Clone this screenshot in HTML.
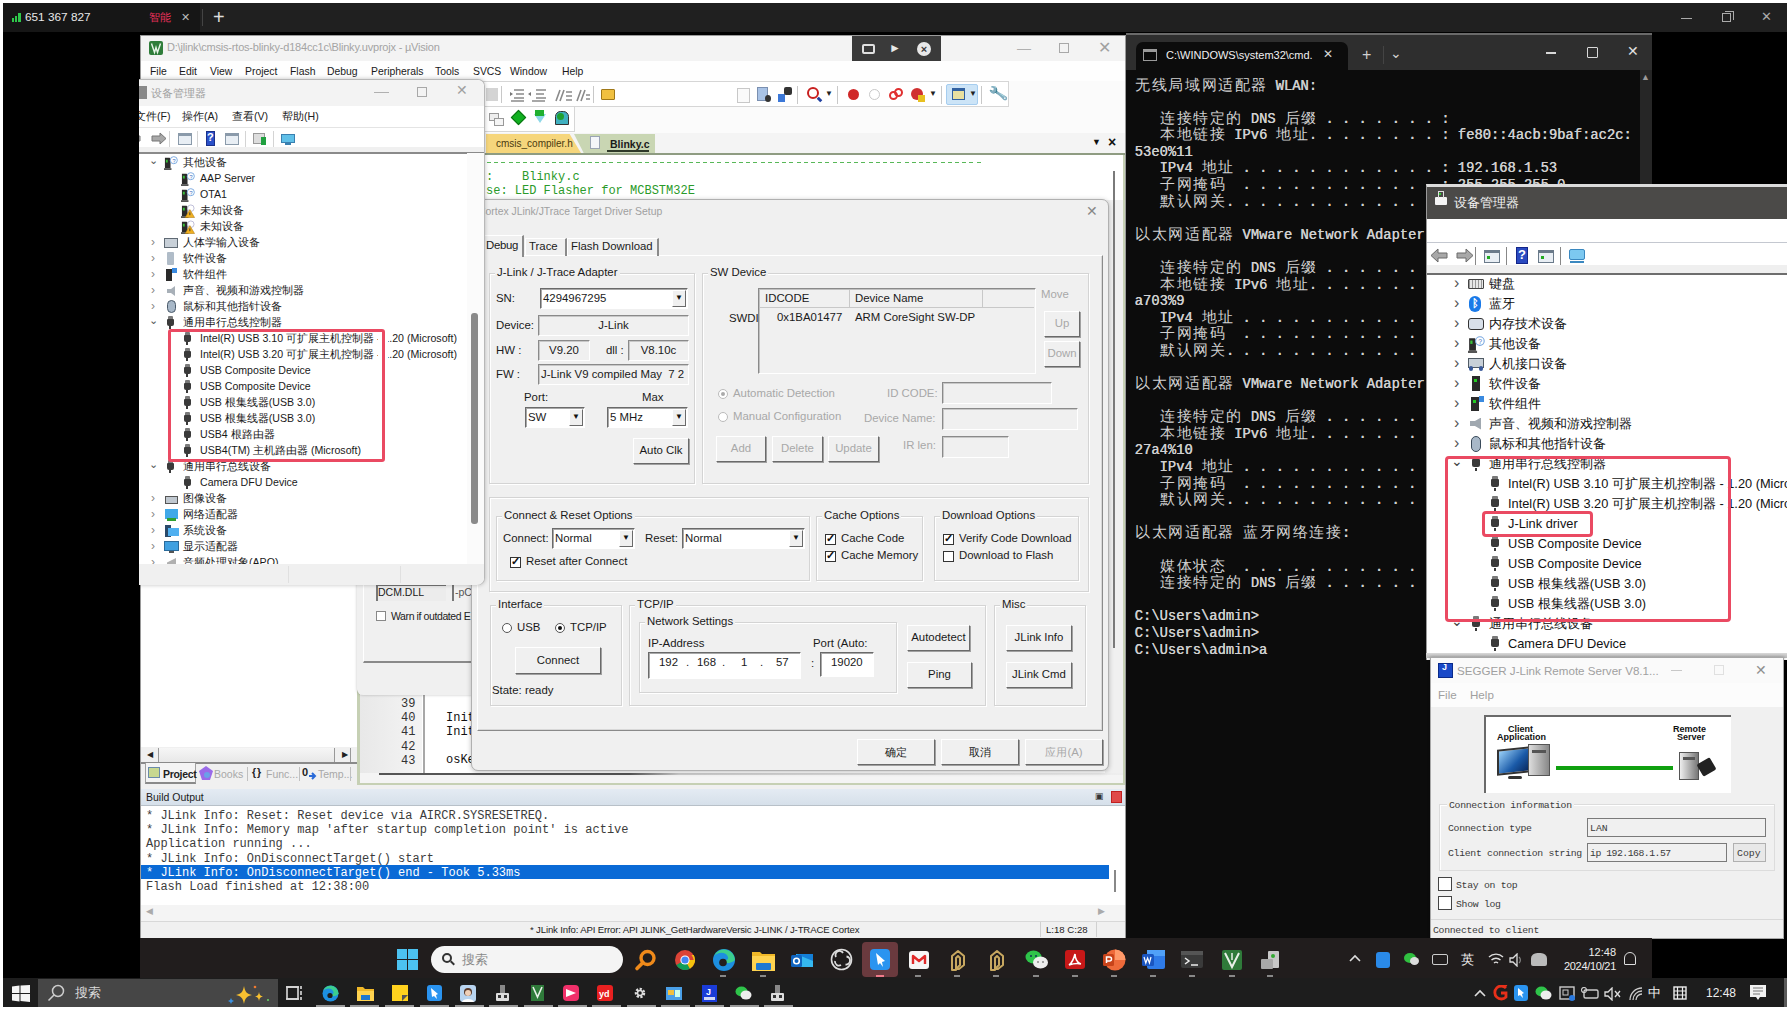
<!DOCTYPE html>
<html><head><meta charset="utf-8">
<style>
*{box-sizing:border-box}
html,body{margin:0;padding:0}
body{width:1787px;height:1010px;position:relative;overflow:hidden;background:#000;font-family:"Liberation Sans",sans-serif;color:#000}
.a{position:absolute}
.nw{white-space:pre}
</style></head><body>
<!-- outer frame -->
<div class="a" style="left:0;top:0;width:1787px;height:3px;background:#fff"></div>
<div class="a" style="left:0;top:0;width:3px;height:1010px;background:#fff"></div>
<div class="a" style="left:0;top:1007px;width:1787px;height:3px;background:#fff"></div>
<div class="a" style="left:3px;top:3px;width:1784px;height:29px;background:#202020"></div>
<div class="a" style="left:3px;top:3px;width:197px;height:29px;background:#161616"></div>
<div class="a" style="left:12.0px;top:18px;width:2.2px;height:4px;background:#2ec84a"></div>
<div class="a" style="left:15.2px;top:16px;width:2.2px;height:6px;background:#2ec84a"></div>
<div class="a" style="left:18.4px;top:13px;width:2.2px;height:9px;background:#2ec84a"></div>
<div class="a nw" style="left:25px;top:10px;font-size:11.8px;color:#e8e8e8">651 367 827</div>
<div class="a nw" style="left:149px;top:10px;font-size:11px;color:#e8305a">智能</div>
<div class="a nw" style="left:181px;top:11px;font-size:11px;color:#bbb">✕</div>
<div class="a" style="left:202px;top:9px;width:1px;height:17px;background:#444"></div>
<div class="a nw" style="left:213px;top:6px;font-size:20px;color:#ddd">+</div>
<div class="a" style="left:1681px;top:18px;width:11px;height:1px;background:#aaa"></div>
<div class="a" style="left:1722px;top:13px;width:9px;height:9px;border:1px solid #aaa"></div>
<div class="a" style="left:1725px;top:11px;width:9px;height:9px;border-top:1px solid #aaa;border-right:1px solid #aaa"></div>
<div class="a nw" style="left:1761px;top:9px;font-size:13px;color:#aaa">✕</div>
<!-- uVision window -->
<div id="uv" class="a" style="left:140px;top:35px;width:986px;height:903px;background:#f0f0f0;border:1px solid #9a9a9a"></div>
<div class="a" style="left:141px;top:36px;width:984px;height:25px;background:#f3f3f3"></div>
<svg class="a" style="left:149px;top:41px" width="14" height="14"><rect width="14" height="14" rx="2" fill="#2f7d3a"/><path d="M2.5 2.5l3 9 1.5-5 1.5 5 3-9" stroke="#e8f4e8" stroke-width="1.4" fill="none"/></svg>
<div class="a nw" style="left:167px;top:41px;font-size:11px;color:#a4a4a4;letter-spacing:-0.2px">D:\jlink\cmsis-rtos-blinky-d184cc1c\Blinky.uvprojx - &micro;Vision</div>
<div class="a nw" style="left:1017px;top:40px;font-size:14px;color:#b0b0b0">&#8212;</div>
<div class="a" style="left:1059px;top:43px;width:10px;height:10px;border:1px solid #a8a8a8"></div>
<div class="a nw" style="left:1098px;top:38px;font-size:16px;color:#a0a0a0">&#10005;</div>
<!-- remote bar -->
<div class="a" style="left:852px;top:36px;width:89px;height:26px;background:#3a3a3a"></div>
<div class="a" style="left:862px;top:44px;width:13px;height:10px;border:2px solid #e0e0e0;border-radius:2px"></div>
<div class="a nw" style="left:889px;top:41px;font-size:12px;color:#e8e8e8;font-weight:bold">&#9658;</div>
<div class="a" style="left:917px;top:42px;width:14px;height:14px;border-radius:50%;background:#e8e8e8;color:#3a3a3a;font-size:11px;line-height:14px;text-align:center;font-weight:bold">&#215;</div>
<!-- menu -->
<div class="a" style="left:141px;top:61px;width:984px;height:20px;background:#fefefe"></div>
<div class="a nw" style="left:150px;top:66px;font-size:10.4px;color:#1a1a1a;word-spacing:0"><span class="a" style="top:0;left:0">File</span><span class="a" style="top:0;left:29px">Edit</span><span class="a" style="top:0;left:60px">View</span><span class="a" style="top:0;left:95px">Project</span><span class="a" style="top:0;left:140px">Flash</span><span class="a" style="top:0;left:177px">Debug</span><span class="a" style="top:0;left:221px">Peripherals</span><span class="a" style="top:0;left:285px">Tools</span><span class="a" style="top:0;left:323px">SVCS</span><span class="a" style="top:0;left:360px">Window</span><span class="a" style="top:0;left:412px">Help</span></div>
<!-- toolbars -->
<div class="a" style="left:141px;top:81px;width:984px;height:52px;background:#fbfbfb"></div>
<div class="a" style="left:141px;top:81px;width:868px;height:26px;border:1px solid #d6d6d6;background:#fff"></div>
<div class="a" style="left:141px;top:107px;width:434px;height:25px;border:1px solid #d6d6d6;border-top:none;background:#fff"></div>

<!-- toolbar icons row1 (visible part) -->
<div class="a" style="left:486px;top:88px;width:12px;height:13px;background:#c9c9c9;opacity:.8"></div>
<div class="a" style="left:501px;top:86px;width:1px;height:17px;background:#c8c8c8"></div>
<svg class="a" style="left:508px;top:86px" width="84" height="18" viewBox="0 0 84 18">
<g stroke="#8a8a8a" stroke-width="1.6">
<path d="M6 4h10M8 8h8M6 12h10M3 15h13"/>
<path d="M28 4h10M28 8h8M28 12h10M24 15h13"/>
<path d="M48 15l4-11M52 15l4-11M58 6h6M58 10h6M58 14h6"/>
<path d="M69 15l4-11M73 15l4-11M78 9h4M78 13h4"/>
</g>
<path d="M2 6l3 2-3 2z" fill="#777"/><path d="M23 6l-3 2 3 2z" fill="#777"/>
</svg>
<div class="a" style="left:593px;top:86px;width:1px;height:17px;background:#c8c8c8"></div>
<div class="a" style="left:601px;top:89px;width:14px;height:11px;background:#f0c040;border:1px solid #a07818;border-radius:1px"></div>
<div class="a" style="left:737px;top:88px;width:13px;height:15px;border:1px solid #c8c8c8;background:#fafafa"></div>
<div class="a" style="left:757px;top:87px;width:11px;height:14px;background:#a9c3e6;border:1px solid #7a8fb0"></div>
<div class="a" style="left:765px;top:95px;width:6px;height:7px;background:#333;border-radius:50%"></div>
<div class="a" style="left:778px;top:94px;width:7px;height:8px;background:#3c78d8"></div>
<div class="a" style="left:784px;top:87px;width:8px;height:8px;background:#333;border-radius:2px"></div>
<div class="a" style="left:797px;top:86px;width:1px;height:18px;background:#c8c8c8"></div>
<div class="a" style="left:807px;top:87px;width:12px;height:12px;border:2px solid #c82020;border-radius:50%;background:#fff"></div>
<div class="a" style="left:817px;top:98px;width:5px;height:3px;background:#2040a0;transform:rotate(45deg)"></div>
<div class="a nw" style="left:825px;top:89px;font-size:8px;color:#222">&#9660;</div>
<div class="a" style="left:837px;top:86px;width:1px;height:18px;background:#c8c8c8"></div>
<div class="a" style="left:848px;top:89px;width:11px;height:11px;background:#d02828;border-radius:50%"></div>
<div class="a" style="left:869px;top:89px;width:11px;height:11px;border:1px solid #c8c8c8;border-radius:50%"></div>
<div class="a" style="left:889px;top:91px;width:9px;height:9px;border:2px solid #e03030;border-radius:50%"></div>
<div class="a" style="left:894px;top:88px;width:9px;height:9px;border:2px solid #e03030;border-radius:50%"></div>
<div class="a" style="left:911px;top:88px;width:12px;height:12px;background:#d03030;border-radius:50%"></div>
<div class="a" style="left:918px;top:95px;width:7px;height:7px;background:#e8c020"></div>
<div class="a nw" style="left:929px;top:89px;font-size:8px;color:#222">&#9660;</div>
<div class="a" style="left:941px;top:86px;width:1px;height:18px;background:#c8c8c8"></div>
<div class="a" style="left:946px;top:84px;width:32px;height:21px;background:#cce4f7;border:1px solid #a6cdef;border-radius:2px"></div>
<div class="a" style="left:952px;top:88px;width:13px;height:12px;background:#e8e0a0;border:1px solid #3060a0;border-top:3px solid #3060a0"></div>
<div class="a nw" style="left:969px;top:89px;font-size:8px;color:#222">&#9660;</div>
<div class="a" style="left:981px;top:86px;width:1px;height:18px;background:#c8c8c8"></div>
<div class="a nw" style="left:989px;top:84px;font-size:15px;color:#3a6ab0;transform:rotate(-10deg)">&#128295;</div>
<!-- row2 icons -->
<div class="a" style="left:489px;top:113px;width:10px;height:8px;border:1px solid #999;background:#eee"></div>
<div class="a" style="left:494px;top:118px;width:10px;height:8px;border:1px solid #999;background:#f5f5f5"></div>
<div class="a" style="left:513px;top:112px;width:11px;height:11px;background:#10b020;transform:rotate(45deg);border:1px solid #087010"></div>
<div class="a" style="left:534px;top:114px;width:12px;height:9px;background:#8ed8e8;clip-path:polygon(0 0,100% 0,50% 100%)"></div>
<div class="a" style="left:535px;top:110px;width:9px;height:6px;background:#20b030"></div>
<div class="a" style="left:555px;top:111px;width:14px;height:14px;background:#40b0c0;border:1px solid #333;border-radius:40% 40% 0 0"></div>
<div class="a" style="left:557px;top:113px;width:7px;height:7px;background:#20a030;border-radius:50%"></div>
<!-- tabs row -->
<div class="a" style="left:141px;top:133px;width:984px;height:20px;background:#f4f4f4"></div>
<div class="a" style="left:486px;top:134px;width:95px;height:19px;background:#f6d67c;clip-path:polygon(0 0,88% 0,100% 100%,0 100%)"></div>
<div class="a nw" style="left:496px;top:138px;font-size:10px;color:#4a3a10">cmsis_compiler.h</div>
<div class="a" style="left:574px;top:134px;width:81px;height:19px;background:#c9d6b3;clip-path:polygon(0 0,100% 0,100% 100%,12% 100%,0 0)"></div>
<div class="a" style="left:590px;top:136px;width:10px;height:13px;background:#f4f6fa;border:1px solid #9aa4b4"></div>
<div class="a nw" style="left:610px;top:138px;font-size:10.5px;color:#1a1a1a;font-weight:bold">Blinky.c</div>
<div class="a" style="left:607px;top:150px;width:42px;height:1.5px;background:#2f3a2a"></div>
<div class="a nw" style="left:1092px;top:137px;font-size:9px;color:#111">&#9660;</div>
<div class="a nw" style="left:1108px;top:134px;font-size:14px;color:#111;font-weight:bold">&#215;</div>
<div class="a" style="left:141px;top:153px;width:984px;height:2px;background:#8f9c82"></div>
<!-- editor top -->
<div class="a" style="left:141px;top:155px;width:982px;height:45px;background:#fff"></div>
<div class="a" style="left:1123px;top:155px;width:2px;height:630px;background:#c6d0b4"></div>
<div class="a" style="left:1113px;top:171px;width:2px;height:477px;background:#7a7a7a"></div>
<div class="a" style="left:487px;top:162px;width:497px;height:1.3px;background:repeating-linear-gradient(90deg,#58b858 0 4px,transparent 4px 7.2px)"></div>
<div class="a nw" style="left:486px;top:170px;font-family:'Liberation Mono',monospace;font-size:12px;color:#2a9a2a">:    Blinky.c</div>
<div class="a nw" style="left:486px;top:184px;font-family:'Liberation Mono',monospace;font-size:12px;color:#2a9a2a">se: LED Flasher for MCBSTM32E</div>

<!-- uv lower -->
<div class="a" style="left:141px;top:155px;width:216px;height:608px;background:#fff"></div>
<div class="a" style="left:141px;top:747px;width:216px;height:17px;background:#f0f0f0;border-bottom:2px solid #8a8a8a"></div>
<div class="a nw" style="left:147px;top:750px;font-size:8px;color:#222">◀</div>
<div class="a" style="left:158px;top:748px;width:177px;height:14px;background:linear-gradient(#f6f6f6,#e8e8e8);border-left:1.5px solid #999;border-right:1.5px solid #999"></div>
<div class="a" style="left:337px;top:748px;width:14px;height:14px;border-right:1.5px solid #999"></div>
<div class="a nw" style="left:342px;top:750px;font-size:8px;color:#222">▶</div>
<div class="a" style="left:141px;top:764px;width:216px;height:20px;background:#f0f0f0"></div>
<div class="a" style="left:145px;top:763px;width:51px;height:21px;background:#f4f4f4;border:1px solid #a0a0a0;border-top:none;border-bottom:2px solid #8a8a8a"></div>
<div class="a" style="left:148px;top:767px;width:12px;height:11px;background:#c8d890;border:1px solid #6a8aaa"></div>
<div class="a nw" style="left:163px;top:768px;font-size:10.5px;color:#222;font-weight:bold;letter-spacing:-0.3px">Project</div>
<svg class="a" style="left:199px;top:766px" width="14" height="14"><path d="M7 0l7 5-3 9H3L0 5z" fill="#9a6ae8"/><circle cx="8" cy="9" r="3" fill="#6aa0e8"/></svg>
<div class="a nw" style="left:214px;top:768px;font-size:10.5px;color:#a8a8a8">Books</div>
<div class="a" style="left:247px;top:767px;width:1px;height:14px;background:#c0c0c0"></div>
<div class="a nw" style="left:252px;top:766px;font-size:10.5px;color:#222;font-weight:bold;letter-spacing:-1px">{ }</div>
<div class="a nw" style="left:266px;top:768px;font-size:10.5px;color:#a8a8a8">Func...</div>
<div class="a" style="left:299px;top:767px;width:1px;height:14px;background:#c0c0c0"></div>
<div class="a nw" style="left:302px;top:766px;font-size:11px;color:#222;font-weight:bold">0</div>
<svg class="a" style="left:309px;top:772px" width="8" height="8"><path d="M0 4h5M3 1l3 3-3 3" stroke="#2a6ad8" stroke-width="2" fill="none"/></svg>
<div class="a nw" style="left:318px;top:768px;font-size:10.5px;color:#a8a8a8">Temp...</div>
<div class="a" style="left:350px;top:767px;width:1px;height:14px;background:#c0c0c0"></div>
<div class="a" style="left:357px;top:690px;width:766px;height:95px;background:#fff"></div>
<div class="a" style="left:1105px;top:650px;width:18px;height:135px;background:#f0f0f0"></div>
<div class="a" style="left:360px;top:695px;width:62px;height:78px;background:linear-gradient(90deg,#e8e8e8,#f4f4f4)"></div>
<div class="a" style="left:423px;top:695px;width:2px;height:78px;background:#a8a8a8"></div>
<div class="a nw" style="left:401px;top:697.0px;font-family:'Liberation Mono',monospace;font-size:12px;color:#333">39</div>
<div class="a nw" style="left:401px;top:711.2px;font-family:'Liberation Mono',monospace;font-size:12px;color:#333">40</div>
<div class="a nw" style="left:401px;top:725.4px;font-family:'Liberation Mono',monospace;font-size:12px;color:#333">41</div>
<div class="a nw" style="left:401px;top:739.6px;font-family:'Liberation Mono',monospace;font-size:12px;color:#333">42</div>
<div class="a nw" style="left:401px;top:753.8px;font-family:'Liberation Mono',monospace;font-size:12px;color:#333">43</div>
<div class="a nw" style="left:446px;top:711px;font-family:'Liberation Mono',monospace;font-size:12px;color:#111">Init</div>
<div class="a nw" style="left:446px;top:725px;font-family:'Liberation Mono',monospace;font-size:12px;color:#111">Init</div>
<div class="a nw" style="left:446px;top:753px;font-family:'Liberation Mono',monospace;font-size:12px;color:#111">osKe</div>
<div class="a" style="left:360px;top:773px;width:763px;height:10px;background:#f4f4f4"></div>
<div class="a" style="left:379px;top:773px;width:744px;height:2px;background:linear-gradient(90deg,#555 0,#555 250px,#ccc 300px,#eee)"></div>
<div class="a" style="left:357px;top:783px;width:768px;height:2px;background:#c6d0b4"></div>
<div class="a" style="left:357px;top:690px;width:3px;height:95px;background:#c6d0b4"></div>
<div class="a" style="left:357px;top:560px;width:130px;height:135px;background:#f0f0f0;border-radius:0 0 6px 6px;box-shadow:0 0 3px rgba(0,0,0,.25)"></div>
<div class="a" style="left:363px;top:560px;width:120px;height:103px;border-left:1px solid #fff;border-bottom:2px solid #8a8a8a"></div>
<div class="a" style="left:376px;top:585px;width:70px;height:16px;background:#ececec;border-left:2px solid #777;border-top:1px solid #777"></div>
<div class="a nw" style="left:378px;top:586px;font-size:10.5px;color:#222">DCM.DLL</div>
<div class="a" style="left:452px;top:585px;width:30px;height:16px;border-left:2px solid #777"></div>
<div class="a nw" style="left:455px;top:586px;font-size:10.5px;color:#555">-pCl</div>
<div class="a" style="left:376px;top:611px;width:10px;height:10px;border:1px solid #888;background:#fff"></div>
<div class="a nw" style="left:391px;top:610px;font-size:10.5px;color:#222;letter-spacing:-0.4px">Warn if outdated E</div>
<div class="a" style="left:141px;top:785px;width:984px;height:4px;background:#f0f0f0"></div>
<div class="a" style="left:141px;top:789px;width:984px;height:16px;background:linear-gradient(180deg,#e4ebf3,#d6e0ea)"></div>
<div class="a nw" style="left:146px;top:791px;font-size:10.5px;color:#1a1a1a">Build Output</div>
<div class="a nw" style="left:1095px;top:791px;font-size:9px;color:#333">▣</div>
<div class="a" style="left:1111px;top:791px;width:11px;height:12px;background:#e04848;border:1px solid #c02020"></div>
<div class="a" style="left:141px;top:805px;width:984px;height:100px;background:#fff;border-top:1px solid #b8c0c8"></div>
<div class="a" style="left:141px;top:865px;width:968px;height:14px;background:#0a6ad6"></div>
<div class="a nw" style="left:146px;top:809.0px;font-family:'Liberation Mono',monospace;font-size:12px;color:#3c3c3c">* JLink Info: Reset: Reset device via AIRCR.SYSRESETREQ.</div>
<div class="a nw" style="left:146px;top:823.2px;font-family:'Liberation Mono',monospace;font-size:12px;color:#3c3c3c">* JLink Info: Memory map 'after startup completion point' is active</div>
<div class="a nw" style="left:146px;top:837.4px;font-family:'Liberation Mono',monospace;font-size:12px;color:#3c3c3c">Application running ...</div>
<div class="a nw" style="left:146px;top:851.6px;font-family:'Liberation Mono',monospace;font-size:12px;color:#3c3c3c">* JLink Info: OnDisconnectTarget() start</div>
<div class="a nw" style="left:146px;top:865.8px;font-family:'Liberation Mono',monospace;font-size:12px;color:#fff">* JLink Info: OnDisconnectTarget() end - Took 5.33ms</div>
<div class="a nw" style="left:146px;top:880.0px;font-family:'Liberation Mono',monospace;font-size:12px;color:#3c3c3c">Flash Load finished at 12:38:00</div>
<div class="a" style="left:1114px;top:870px;width:2px;height:22px;background:#888"></div>
<div class="a" style="left:141px;top:905px;width:984px;height:16px;background:#f4f4f4"></div>
<div class="a nw" style="left:146px;top:906px;font-size:9px;color:#aaa">◀</div>
<div class="a nw" style="left:1098px;top:906px;font-size:9px;color:#aaa">▶</div>
<div class="a" style="left:141px;top:921px;width:984px;height:17px;background:#f0f0f0;border-top:1px solid #d8d8d8"></div>
<div class="a nw" style="left:530px;top:924px;font-size:9.6px;color:#222;letter-spacing:-0.15px">* JLink Info: API Error: API JLINK_GetHardwareVersic J-LINK / J-TRACE Cortex</div>
<div class="a" style="left:1040px;top:922px;width:1px;height:15px;background:#d0d0d0"></div>
<div class="a nw" style="left:1046px;top:924px;font-size:9.6px;color:#222">L:18 C:28</div>
<div class="a" style="left:1096px;top:922px;width:1px;height:15px;background:#d0d0d0"></div>
<!-- jlink dialog -->
<div class="a" style="left:471px;top:199px;width:638px;height:572px;background:#f0f0f0;border:1px solid #b0b0b0;border-radius:7px;box-shadow:0 1px 5px rgba(0,0,0,.25)"></div>
<div class="a nw" style="left:478px;top:206px;font-size:10.4px;color:#a0a0a0">Cortex JLink/JTrace Target Driver Setup</div>
<div class="a nw" style="left:1086px;top:203px;font-size:14px;color:#888">✕</div>
<div class="a" style="left:477px;top:255px;width:626px;height:476px;border:1px solid;border-color:#fff #8a8a8a #8a8a8a #fff;box-shadow:inset -1px -1px 0 #d8d8d8"></div>
<div class="a" style="left:472px;top:235px;width:52px;height:22px;background:#f0f0f0;border-right:2px solid #8a8a8a;border-top:1px solid #fff"></div>
<div class="a nw" style="left:486px;top:239px;font-size:11.4px;color:#1a1a1a;letter-spacing:-0.3px">Debug</div>
<div class="a" style="left:525px;top:238px;width:42px;height:18px;border-right:2px solid #8a8a8a;border-top:1px solid #fff;border-left:1px solid #fff"></div>
<div class="a nw" style="left:529px;top:240px;font-size:11.4px;color:#1a1a1a;">Trace</div>
<div class="a" style="left:567px;top:238px;width:92px;height:18px;border-right:2px solid #8a8a8a;border-top:1px solid #fff;border-left:1px solid #fff"></div>
<div class="a nw" style="left:571px;top:240px;font-size:11.4px;color:#1a1a1a;">Flash Download</div>
<div class="a" style="left:472px;top:256px;width:4px;height:1px;background:#f0f0f0"></div>
<div class="a" style="left:489px;top:273px;width:206px;height:211px;border:1px solid #d4d4d4;box-shadow:inset 1px 1px 0 #fff,1px 1px 0 #fff"></div>
<div class="a nw" style="left:495px;top:266px;font-size:11.4px;color:#1a1a1a;background:#f0f0f0;padding:0 2px">J-Link / J-Trace Adapter</div>
<div class="a nw" style="left:496px;top:292px;font-size:11.4px;color:#1a1a1a;">SN:</div>
<div class="a" style="left:540px;top:288px;width:148px;height:21px;background:#fff;border:1px solid;border-color:#6a6a6a #fff #fff #6a6a6a;box-shadow:inset 1px 1px 0 #a8a8a8"></div>
<div class="a nw" style="left:543px;top:292px;font-size:11.4px;color:#1a1a1a;">4294967295</div>
<div class="a" style="left:672px;top:290px;width:14px;height:17px;background:#f0f0f0;border:1px solid;border-color:#fff #6a6a6a #6a6a6a #fff"></div>
<div class="a nw" style="left:675px;top:293px;font-size:8px;color:#111">▼</div>
<div class="a nw" style="left:496px;top:319px;font-size:11.4px;color:#1a1a1a;">Device:</div>
<div class="a" style="left:538px;top:315px;width:151px;height:21px;background:#f0f0f0;border:1px solid;border-color:#8a8a8a #fff #fff #8a8a8a;box-shadow:inset 1px 1px 0 #c8c8c8"></div>
<div class="a nw" style="left:538px;top:319px;width:151px;text-align:center;font-size:11.4px;color:#1a1a1a;color:#1a1a1a">J-Link</div>
<div class="a nw" style="left:496px;top:344px;font-size:11.4px;color:#1a1a1a;">HW :</div>
<div class="a" style="left:538px;top:340px;width:52px;height:21px;background:#f0f0f0;border:1px solid;border-color:#8a8a8a #fff #fff #8a8a8a;box-shadow:inset 1px 1px 0 #c8c8c8"></div>
<div class="a nw" style="left:538px;top:344px;width:52px;text-align:center;font-size:11.4px;color:#1a1a1a;color:#1a1a1a">V9.20</div>
<div class="a nw" style="left:606px;top:344px;font-size:11.4px;color:#1a1a1a;">dll :</div>
<div class="a" style="left:628px;top:340px;width:61px;height:21px;background:#f0f0f0;border:1px solid;border-color:#8a8a8a #fff #fff #8a8a8a;box-shadow:inset 1px 1px 0 #c8c8c8"></div>
<div class="a nw" style="left:628px;top:344px;width:61px;text-align:center;font-size:11.4px;color:#1a1a1a;color:#1a1a1a">V8.10c</div>
<div class="a nw" style="left:496px;top:368px;font-size:11.4px;color:#1a1a1a;">FW :</div>
<div class="a" style="left:538px;top:364px;width:151px;height:21px;background:#f0f0f0;border:1px solid;border-color:#8a8a8a #fff #fff #8a8a8a;box-shadow:inset 1px 1px 0 #c8c8c8"></div>
<div class="a nw" style="left:541px;top:368px;font-size:11.4px;color:#1a1a1a;color:#1a1a1a">J-Link V9 compiled May  7 2</div>
<div class="a nw" style="left:524px;top:391px;font-size:11.4px;color:#1a1a1a;">Port:</div>
<div class="a nw" style="left:642px;top:391px;font-size:11.4px;color:#1a1a1a;">Max</div>
<div class="a" style="left:525px;top:407px;width:60px;height:21px;background:#fff;border:1px solid;border-color:#6a6a6a #fff #fff #6a6a6a;box-shadow:inset 1px 1px 0 #a8a8a8"></div>
<div class="a nw" style="left:528px;top:411px;font-size:11.4px;color:#1a1a1a;">SW</div>
<div class="a" style="left:569px;top:409px;width:14px;height:17px;background:#f0f0f0;border:1px solid;border-color:#fff #6a6a6a #6a6a6a #fff"></div>
<div class="a nw" style="left:572px;top:412px;font-size:8px;color:#111">▼</div>
<div class="a" style="left:607px;top:407px;width:81px;height:21px;background:#fff;border:1px solid;border-color:#6a6a6a #fff #fff #6a6a6a;box-shadow:inset 1px 1px 0 #a8a8a8"></div>
<div class="a nw" style="left:610px;top:411px;font-size:11.4px;color:#1a1a1a;">5 MHz</div>
<div class="a" style="left:672px;top:409px;width:14px;height:17px;background:#f0f0f0;border:1px solid;border-color:#fff #6a6a6a #6a6a6a #fff"></div>
<div class="a nw" style="left:675px;top:412px;font-size:8px;color:#111">▼</div>
<div class="a" style="left:633px;top:438px;width:56px;height:26px;background:#f0f0f0;border:1px solid;border-color:#fff #6a6a6a #6a6a6a #fff;box-shadow:1px 1px 0 #a0a0a0"></div>
<div class="a nw" style="left:633px;top:444px;width:56px;text-align:center;font-size:11.4px;color:#1a1a1a;">Auto Clk</div>
<div class="a" style="left:702px;top:273px;width:387px;height:211px;border:1px solid #d4d4d4;box-shadow:inset 1px 1px 0 #fff,1px 1px 0 #fff"></div>
<div class="a nw" style="left:708px;top:266px;font-size:11.4px;color:#1a1a1a;background:#f0f0f0;padding:0 2px">SW Device</div>
<div class="a" style="left:758px;top:288px;width:278px;height:86px;background:#f0f0f0;border:1px solid;border-color:#8a8a8a #fff #fff #8a8a8a;box-shadow:inset 1px 1px 0 #c0c0c0"></div>
<div class="a" style="left:760px;top:290px;width:274px;height:18px;border-bottom:1px solid #c8c8c8"></div>
<div class="a" style="left:849px;top:290px;width:1px;height:18px;background:#c8c8c8"></div>
<div class="a" style="left:982px;top:290px;width:1px;height:18px;background:#c8c8c8"></div>
<div class="a nw" style="left:765px;top:292px;font-size:11.4px;color:#1a1a1a;">IDCODE</div>
<div class="a nw" style="left:855px;top:292px;font-size:11.4px;color:#1a1a1a;">Device Name</div>
<div class="a nw" style="left:777px;top:311px;font-size:11.4px;color:#1a1a1a;">0x1BA01477</div>
<div class="a nw" style="left:855px;top:311px;font-size:11.4px;color:#1a1a1a;">ARM CoreSight SW-DP</div>
<div class="a nw" style="left:729px;top:312px;font-size:11.4px;color:#1a1a1a;">SWDI</div>
<div class="a nw" style="left:1041px;top:288px;font-size:11.4px;color:#a8a8a8;">Move</div>
<div class="a" style="left:1044px;top:311px;width:36px;height:26px;background:#f0f0f0;border:1px solid;border-color:#fff #6a6a6a #6a6a6a #fff;box-shadow:1px 1px 0 #a0a0a0"></div>
<div class="a nw" style="left:1044px;top:317px;width:36px;text-align:center;font-size:11.4px;color:#a8a8a8;">Up</div>
<div class="a" style="left:1044px;top:341px;width:36px;height:26px;background:#f0f0f0;border:1px solid;border-color:#fff #6a6a6a #6a6a6a #fff;box-shadow:1px 1px 0 #a0a0a0"></div>
<div class="a nw" style="left:1044px;top:347px;width:36px;text-align:center;font-size:11.4px;color:#a8a8a8;">Down</div>
<div class="a" style="left:718px;top:389px;width:10px;height:10px;border-radius:50%;background:#fff;border:1px solid #bbb"></div>
<div class="a" style="left:721px;top:392px;width:4px;height:4px;border-radius:50%;background:#aaa"></div>
<div class="a nw" style="left:733px;top:387px;font-size:11.4px;color:#a8a8a8;">Automatic Detection</div>
<div class="a" style="left:718px;top:412px;width:10px;height:10px;border-radius:50%;background:#fff;border:1px solid #bbb"></div>
<div class="a nw" style="left:733px;top:410px;font-size:11.4px;color:#a8a8a8;">Manual Configuration</div>
<div class="a nw" style="left:887px;top:387px;font-size:11.4px;color:#a8a8a8;">ID CODE:</div>
<div class="a" style="left:942px;top:382px;width:110px;height:22px;background:#f0f0f0;border:1px solid;border-color:#8a8a8a #fff #fff #8a8a8a;box-shadow:inset 1px 1px 0 #c8c8c8"></div>
<div class="a nw" style="left:864px;top:412px;font-size:11.4px;color:#a8a8a8;">Device Name:</div>
<div class="a" style="left:942px;top:408px;width:136px;height:22px;background:#f0f0f0;border:1px solid;border-color:#8a8a8a #fff #fff #8a8a8a;box-shadow:inset 1px 1px 0 #c8c8c8"></div>
<div class="a" style="left:716px;top:436px;width:50px;height:26px;background:#f0f0f0;border:1px solid;border-color:#fff #6a6a6a #6a6a6a #fff;box-shadow:1px 1px 0 #a0a0a0"></div>
<div class="a nw" style="left:716px;top:442px;width:50px;text-align:center;font-size:11.4px;color:#a8a8a8;">Add</div>
<div class="a" style="left:772px;top:436px;width:51px;height:26px;background:#f0f0f0;border:1px solid;border-color:#fff #6a6a6a #6a6a6a #fff;box-shadow:1px 1px 0 #a0a0a0"></div>
<div class="a nw" style="left:772px;top:442px;width:51px;text-align:center;font-size:11.4px;color:#a8a8a8;">Delete</div>
<div class="a" style="left:828px;top:436px;width:51px;height:26px;background:#f0f0f0;border:1px solid;border-color:#fff #6a6a6a #6a6a6a #fff;box-shadow:1px 1px 0 #a0a0a0"></div>
<div class="a nw" style="left:828px;top:442px;width:51px;text-align:center;font-size:11.4px;color:#a8a8a8;">Update</div>
<div class="a nw" style="left:903px;top:439px;font-size:11.4px;color:#a8a8a8;">IR len:</div>
<div class="a" style="left:942px;top:436px;width:67px;height:22px;background:#f0f0f0;border:1px solid;border-color:#8a8a8a #fff #fff #8a8a8a;box-shadow:inset 1px 1px 0 #c8c8c8"></div>
<div class="a" style="left:489px;top:497px;width:600px;height:95px;border:1px solid #d4d4d4;box-shadow:inset 1px 1px 0 #fff,1px 1px 0 #fff"></div>
<div class="a" style="left:496px;top:516px;width:314px;height:65px;border:1px solid #d4d4d4;box-shadow:inset 1px 1px 0 #fff,1px 1px 0 #fff"></div>
<div class="a nw" style="left:502px;top:509px;font-size:11.4px;color:#1a1a1a;background:#f0f0f0;padding:0 2px">Connect &amp; Reset Options</div>
<div class="a nw" style="left:503px;top:532px;font-size:11.4px;color:#1a1a1a;">Connect:</div>
<div class="a" style="left:552px;top:528px;width:83px;height:21px;background:#fff;border:1px solid;border-color:#6a6a6a #fff #fff #6a6a6a;box-shadow:inset 1px 1px 0 #a8a8a8"></div>
<div class="a nw" style="left:555px;top:532px;font-size:11.4px;color:#1a1a1a;">Normal</div>
<div class="a" style="left:619px;top:530px;width:14px;height:17px;background:#f0f0f0;border:1px solid;border-color:#fff #6a6a6a #6a6a6a #fff"></div>
<div class="a nw" style="left:622px;top:533px;font-size:8px;color:#111">▼</div>
<div class="a nw" style="left:645px;top:532px;font-size:11.4px;color:#1a1a1a;">Reset:</div>
<div class="a" style="left:682px;top:528px;width:123px;height:21px;background:#fff;border:1px solid;border-color:#6a6a6a #fff #fff #6a6a6a;box-shadow:inset 1px 1px 0 #a8a8a8"></div>
<div class="a nw" style="left:685px;top:532px;font-size:11.4px;color:#1a1a1a;">Normal</div>
<div class="a" style="left:789px;top:530px;width:14px;height:17px;background:#f0f0f0;border:1px solid;border-color:#fff #6a6a6a #6a6a6a #fff"></div>
<div class="a nw" style="left:792px;top:533px;font-size:8px;color:#111">▼</div>
<div class="a" style="left:510px;top:557px;width:11px;height:11px;background:#fff;border:1px solid #333"></div>
<div class="a nw" style="left:511px;top:555px;font-size:11px;color:#111;font-weight:bold">✓</div>
<div class="a nw" style="left:526px;top:555px;font-size:11.4px;color:#1a1a1a;">Reset after Connect</div>
<div class="a" style="left:816px;top:516px;width:107px;height:65px;border:1px solid #d4d4d4;box-shadow:inset 1px 1px 0 #fff,1px 1px 0 #fff"></div>
<div class="a nw" style="left:822px;top:509px;font-size:11.4px;color:#1a1a1a;background:#f0f0f0;padding:0 2px">Cache Options</div>
<div class="a" style="left:825px;top:534px;width:11px;height:11px;background:#fff;border:1px solid #333"></div>
<div class="a nw" style="left:826px;top:532px;font-size:11px;color:#111;font-weight:bold">✓</div>
<div class="a nw" style="left:841px;top:532px;font-size:11.4px;color:#1a1a1a;">Cache Code</div>
<div class="a" style="left:825px;top:551px;width:11px;height:11px;background:#fff;border:1px solid #333"></div>
<div class="a nw" style="left:826px;top:549px;font-size:11px;color:#111;font-weight:bold">✓</div>
<div class="a nw" style="left:841px;top:549px;font-size:11.4px;color:#1a1a1a;">Cache Memory</div>
<div class="a" style="left:934px;top:516px;width:145px;height:65px;border:1px solid #d4d4d4;box-shadow:inset 1px 1px 0 #fff,1px 1px 0 #fff"></div>
<div class="a nw" style="left:940px;top:509px;font-size:11.4px;color:#1a1a1a;background:#f0f0f0;padding:0 2px">Download Options</div>
<div class="a" style="left:943px;top:534px;width:11px;height:11px;background:#fff;border:1px solid #333"></div>
<div class="a nw" style="left:944px;top:532px;font-size:11px;color:#111;font-weight:bold">✓</div>
<div class="a nw" style="left:959px;top:532px;font-size:11.4px;color:#1a1a1a;">Verify Code Download</div>
<div class="a" style="left:943px;top:551px;width:11px;height:11px;background:#fff;border:1px solid #333"></div>
<div class="a nw" style="left:959px;top:549px;font-size:11.4px;color:#1a1a1a;">Download to Flash</div>
<div class="a" style="left:490px;top:605px;width:132px;height:101px;border:1px solid #d4d4d4;box-shadow:inset 1px 1px 0 #fff,1px 1px 0 #fff"></div>
<div class="a nw" style="left:496px;top:598px;font-size:11.4px;color:#1a1a1a;background:#f0f0f0;padding:0 2px">Interface</div>
<div class="a" style="left:502px;top:623px;width:10px;height:10px;border-radius:50%;background:#fff;border:1px solid #555"></div>
<div class="a nw" style="left:517px;top:621px;font-size:11.4px;color:#1a1a1a;">USB</div>
<div class="a" style="left:555px;top:623px;width:10px;height:10px;border-radius:50%;background:#fff;border:1px solid #555"></div>
<div class="a" style="left:558px;top:626px;width:4px;height:4px;border-radius:50%;background:#111"></div>
<div class="a nw" style="left:570px;top:621px;font-size:11.4px;color:#1a1a1a;">TCP/IP</div>
<div class="a" style="left:515px;top:647px;width:86px;height:27px;background:#f0f0f0;border:1px solid;border-color:#fff #6a6a6a #6a6a6a #fff;box-shadow:1px 1px 0 #a0a0a0"></div>
<div class="a nw" style="left:515px;top:654px;width:86px;text-align:center;font-size:11.4px;color:#1a1a1a;">Connect</div>
<div class="a nw" style="left:492px;top:684px;font-size:11.4px;color:#1a1a1a;">State: ready</div>
<div class="a" style="left:629px;top:605px;width:357px;height:101px;border:1px solid #d4d4d4;box-shadow:inset 1px 1px 0 #fff,1px 1px 0 #fff"></div>
<div class="a nw" style="left:635px;top:598px;font-size:11.4px;color:#1a1a1a;background:#f0f0f0;padding:0 2px">TCP/IP</div>
<div class="a" style="left:639px;top:622px;width:258px;height:71px;border:1px solid #d4d4d4;box-shadow:inset 1px 1px 0 #fff,1px 1px 0 #fff"></div>
<div class="a nw" style="left:645px;top:615px;font-size:11.4px;color:#1a1a1a;background:#f0f0f0;padding:0 2px">Network Settings</div>
<div class="a nw" style="left:648px;top:637px;font-size:11.4px;color:#1a1a1a;">IP-Address</div>
<div class="a nw" style="left:813px;top:637px;font-size:11.4px;color:#1a1a1a;">Port (Auto:</div>
<div class="a" style="left:648px;top:652px;width:153px;height:27px;background:#fff;border:1px solid;border-color:#6a6a6a #fff #fff #6a6a6a;box-shadow:inset 1px 1px 0 #a8a8a8"></div>
<div class="a nw" style="left:659px;top:656px;font-size:11.4px;color:#1a1a1a;">192</div>
<div class="a nw" style="left:686px;top:656px;font-size:11.4px;color:#1a1a1a;">.</div>
<div class="a nw" style="left:697px;top:656px;font-size:11.4px;color:#1a1a1a;">168</div>
<div class="a nw" style="left:722px;top:656px;font-size:11.4px;color:#1a1a1a;">.</div>
<div class="a nw" style="left:741px;top:656px;font-size:11.4px;color:#1a1a1a;">1</div>
<div class="a nw" style="left:760px;top:656px;font-size:11.4px;color:#1a1a1a;">.</div>
<div class="a nw" style="left:776px;top:656px;font-size:11.4px;color:#1a1a1a;">57</div>
<div class="a nw" style="left:811px;top:657px;font-size:11.4px;color:#1a1a1a;">:</div>
<div class="a" style="left:820px;top:652px;width:54px;height:25px;background:#fff;border:1px solid;border-color:#6a6a6a #fff #fff #6a6a6a;box-shadow:inset 1px 1px 0 #a8a8a8"></div>
<div class="a nw" style="left:831px;top:656px;font-size:11.4px;color:#1a1a1a;">19020</div>
<div class="a" style="left:907px;top:625px;width:63px;height:26px;background:#f0f0f0;border:1px solid;border-color:#fff #6a6a6a #6a6a6a #fff;box-shadow:1px 1px 0 #a0a0a0"></div>
<div class="a nw" style="left:907px;top:631px;width:63px;text-align:center;font-size:11.4px;color:#1a1a1a;">Autodetect</div>
<div class="a" style="left:907px;top:662px;width:65px;height:26px;background:#f0f0f0;border:1px solid;border-color:#fff #6a6a6a #6a6a6a #fff;box-shadow:1px 1px 0 #a0a0a0"></div>
<div class="a nw" style="left:907px;top:668px;width:65px;text-align:center;font-size:11.4px;color:#1a1a1a;">Ping</div>
<div class="a" style="left:994px;top:605px;width:92px;height:101px;border:1px solid #d4d4d4;box-shadow:inset 1px 1px 0 #fff,1px 1px 0 #fff"></div>
<div class="a nw" style="left:1000px;top:598px;font-size:11.4px;color:#1a1a1a;background:#f0f0f0;padding:0 2px">Misc</div>
<div class="a" style="left:1006px;top:625px;width:66px;height:26px;background:#f0f0f0;border:1px solid;border-color:#fff #6a6a6a #6a6a6a #fff;box-shadow:1px 1px 0 #a0a0a0"></div>
<div class="a nw" style="left:1006px;top:631px;width:66px;text-align:center;font-size:11.4px;color:#1a1a1a;">JLink Info</div>
<div class="a" style="left:1006px;top:662px;width:66px;height:26px;background:#f0f0f0;border:1px solid;border-color:#fff #6a6a6a #6a6a6a #fff;box-shadow:1px 1px 0 #a0a0a0"></div>
<div class="a nw" style="left:1006px;top:668px;width:66px;text-align:center;font-size:11.4px;color:#1a1a1a;">JLink Cmd</div>
<div class="a" style="left:857px;top:739px;width:78px;height:26px;background:#f0f0f0;border:1px solid;border-color:#fff #6a6a6a #6a6a6a #fff;box-shadow:1px 1px 0 #a0a0a0"></div>
<div class="a nw" style="left:857px;top:745px;width:78px;text-align:center;font-size:11.4px;color:#1a1a1a;">确定</div>
<div class="a" style="left:941px;top:739px;width:78px;height:26px;background:#f0f0f0;border:1px solid;border-color:#fff #6a6a6a #6a6a6a #fff;box-shadow:1px 1px 0 #a0a0a0"></div>
<div class="a nw" style="left:941px;top:745px;width:78px;text-align:center;font-size:11.4px;color:#1a1a1a;">取消</div>
<div class="a" style="left:1025px;top:739px;width:78px;height:26px;background:#f0f0f0;border:1px solid;border-color:#fff #6a6a6a #6a6a6a #fff;box-shadow:1px 1px 0 #a0a0a0"></div>
<div class="a nw" style="left:1025px;top:745px;width:78px;text-align:center;font-size:11.4px;color:#a8a8a8;">应用(A)</div>
<!-- dm1 -->
<div class="a" style="left:139px;top:79px;width:346px;height:506px;background:#fff;border:1px solid #b8b8b8;border-left:none;border-radius:0 7px 7px 0;box-shadow:0 0 4px rgba(0,0,0,.25)"></div>
<div class="a" style="left:139px;top:80px;width:345px;height:26px;background:#f3f3f3;border-radius:0 7px 0 0"></div>
<div class="a" style="left:139px;top:86px;width:8px;height:13px;background:#888"></div>
<div class="a nw" style="left:151px;top:86px;font-size:11px;color:#a0a0a0">设备管理器</div>
<div class="a" style="left:374px;top:92px;width:15px;height:1px;background:#b0b0b0"></div>
<div class="a" style="left:417px;top:87px;width:10px;height:10px;border:1px solid #a8a8a8"></div>
<div class="a nw" style="left:456px;top:82px;font-size:14px;color:#a0a0a0">✕</div>
<div class="a nw" style="left:135px;top:110px;font-size:10.6px;color:#222">文件(F)</div>
<div class="a nw" style="left:182px;top:110px;font-size:10.6px;color:#222">操作(A)</div>
<div class="a nw" style="left:232px;top:110px;font-size:10.6px;color:#222">查看(V)</div>
<div class="a nw" style="left:282px;top:110px;font-size:10.6px;color:#222">帮助(H)</div>
<div class="a" style="left:139px;top:127px;width:345px;height:1px;background:#e4e4e4"></div>
<svg class="a" style="left:139px;top:131px" width="28" height="15" viewBox="14 0 28 15"><path d="M1 7.5L7 2v3h8v5H7v3z" fill="#a8a8a8" stroke="#777" stroke-width="1"/><path d="M41 7.5L35 2v3h-8v5h8v3z" fill="#a8a8a8" stroke="#777" stroke-width="1"/></svg>
<div class="a" style="left:169px;top:131px;width:1px;height:16px;background:#d4d4d4"></div>
<div class="a" style="left:178px;top:133px;width:14px;height:12px;background:#e8eef4;border:1px solid #8a9aaa;border-top:3px solid #8a9aaa"></div>
<div class="a" style="left:197px;top:131px;width:1px;height:16px;background:#d4d4d4"></div>
<div class="a" style="left:206px;top:131px;width:9px;height:15px;background:#2a50c8;border:1px solid #1a308a"></div>
<div class="a nw" style="left:207px;top:131px;font-size:11px;color:#fff;font-weight:bold">?</div>
<div class="a" style="left:225px;top:133px;width:14px;height:12px;background:#e8eef4;border:1px solid #8a9aaa;border-top:3px solid #8a9aaa"></div>
<div class="a" style="left:245px;top:131px;width:1px;height:16px;background:#d4d4d4"></div>
<div class="a" style="left:253px;top:133px;width:12px;height:11px;background:#ddd;border:1px solid #999"></div>
<div class="a" style="left:261px;top:137px;width:5px;height:8px;background:#20a040"></div>
<div class="a" style="left:273px;top:131px;width:1px;height:16px;background:#d4d4d4"></div>
<div class="a" style="left:281px;top:134px;width:14px;height:9px;background:#60c0e8;border:1px solid #3a80b0"></div>
<div class="a" style="left:285px;top:143px;width:6px;height:2px;background:#3a80b0"></div>
<div class="a" style="left:139px;top:147px;width:345px;height:5px;background:#f0f0f0"></div>
<div class="a" style="left:139px;top:152px;width:345px;height:2px;background:#8a8a8a"></div>
<div class="a nw" style="left:149px;top:154px;font-size:11px;color:#555">⌄</div>
<svg class="a" style="left:164px;top:156px" width="14" height="14" viewBox="0 0 15 15"><path d="M1 2h5l1 1v10H1z" fill="#2b2b2b"/><rect x="2" y="4" width="2" height="3" fill="#3ac03a"/><rect x="0" y="13" width="8" height="2" fill="#555"/><circle cx="10.5" cy="4.5" r="3.8" fill="#fff" stroke="#7aa8e0" stroke-width="1"/><text x="9" y="7" font-size="6" fill="#3a70c0" font-family="Liberation Sans">?</text></svg><div class="a nw" style="left:183px;top:156px;font-size:10.6px;color:#1a1a1a;">其他设备</div>
<svg class="a" style="left:181px;top:172px" width="14" height="14" viewBox="0 0 15 15"><path d="M1 2h5l1 1v10H1z" fill="#2b2b2b"/><rect x="2" y="4" width="2" height="3" fill="#3ac03a"/><rect x="0" y="13" width="8" height="2" fill="#555"/><circle cx="10.5" cy="4.5" r="3.8" fill="#fff" stroke="#7aa8e0" stroke-width="1"/><text x="9" y="7" font-size="6" fill="#3a70c0" font-family="Liberation Sans">?</text></svg><div class="a nw" style="left:200px;top:172px;font-size:10.6px;color:#1a1a1a;">AAP Server</div>
<svg class="a" style="left:181px;top:188px" width="14" height="14" viewBox="0 0 15 15"><path d="M1 2h5l1 1v10H1z" fill="#2b2b2b"/><rect x="2" y="4" width="2" height="3" fill="#3ac03a"/><rect x="0" y="13" width="8" height="2" fill="#555"/><circle cx="10.5" cy="4.5" r="3.8" fill="#fff" stroke="#7aa8e0" stroke-width="1"/><text x="9" y="7" font-size="6" fill="#3a70c0" font-family="Liberation Sans">?</text></svg><div class="a nw" style="left:200px;top:188px;font-size:10.6px;color:#1a1a1a;">OTA1</div>
<svg class="a" style="left:181px;top:204px" width="14" height="14" viewBox="0 0 15 15"><path d="M1 2h5l1 1v10H1z" fill="#2b2b2b"/><rect x="2" y="4" width="2" height="3" fill="#3ac03a"/><rect x="0" y="13" width="8" height="2" fill="#555"/><circle cx="10.5" cy="4.5" r="3.5" fill="#fff" stroke="#aac" stroke-width=".8"/><path d="M9.5 6L14.5 14.5H4.5z" fill="#f0b020" stroke="#b07a10" stroke-width=".6"/><rect x="9" y="9" width="1" height="3" fill="#333"/></svg><div class="a nw" style="left:200px;top:204px;font-size:10.6px;color:#1a1a1a;">未知设备</div>
<svg class="a" style="left:181px;top:220px" width="14" height="14" viewBox="0 0 15 15"><path d="M1 2h5l1 1v10H1z" fill="#2b2b2b"/><rect x="2" y="4" width="2" height="3" fill="#3ac03a"/><rect x="0" y="13" width="8" height="2" fill="#555"/><circle cx="10.5" cy="4.5" r="3.5" fill="#fff" stroke="#aac" stroke-width=".8"/><path d="M9.5 6L14.5 14.5H4.5z" fill="#f0b020" stroke="#b07a10" stroke-width=".6"/><rect x="9" y="9" width="1" height="3" fill="#333"/></svg><div class="a nw" style="left:200px;top:220px;font-size:10.6px;color:#1a1a1a;">未知设备</div>
<div class="a nw" style="left:151px;top:235px;font-size:12px;color:#888">›</div>
<div class="a" style="left:164px;top:238px;width:14px;height:10px;background:#c8d0d8;border:1px solid #606a74"></div>
<div class="a nw" style="left:183px;top:236px;font-size:10.6px;color:#1a1a1a;">人体学输入设备</div>
<div class="a nw" style="left:151px;top:251px;font-size:12px;color:#888">›</div>
<div class="a" style="left:167px;top:252px;width:7px;height:13px;background:#b0bcc8;border-radius:1px"></div>
<div class="a nw" style="left:183px;top:252px;font-size:10.6px;color:#1a1a1a;">软件设备</div>
<div class="a nw" style="left:151px;top:267px;font-size:12px;color:#888">›</div>
<div class="a" style="left:166px;top:269px;width:6px;height:12px;background:#2a2a2a"></div>
<div class="a" style="left:172px;top:268px;width:5px;height:5px;background:#3a8ae0"></div>
<div class="a nw" style="left:183px;top:268px;font-size:10.6px;color:#1a1a1a;">软件组件</div>
<div class="a nw" style="left:151px;top:283px;font-size:12px;color:#888">›</div>
<div class="a" style="left:167px;top:286px;width:8px;height:10px;background:#a8b0b8;clip-path:polygon(0 30%,50% 30%,100% 0,100% 100%,50% 70%,0 70%)"></div>
<div class="a nw" style="left:183px;top:284px;font-size:10.6px;color:#1a1a1a;">声音、视频和游戏控制器</div>
<div class="a nw" style="left:151px;top:299px;font-size:12px;color:#888">›</div>
<div class="a" style="left:167px;top:300px;width:9px;height:13px;background:#a8b8c8;border:1px solid #4a5a6a;border-radius:5px"></div>
<div class="a nw" style="left:183px;top:300px;font-size:10.6px;color:#1a1a1a;">鼠标和其他指针设备</div>
<div class="a nw" style="left:149px;top:314px;font-size:11px;color:#555">⌄</div>
<div class="a" style="left:168px;top:316px;width:5px;height:4px;background:#7a7a7a;border-radius:1px"></div>
<div class="a" style="left:167px;top:319px;width:7px;height:7px;background:#3a3a3a;border-radius:1px 1px 2px 2px"></div>
<div class="a" style="left:169px;top:326px;width:2px;height:3px;background:#3a3a3a"></div>
<div class="a nw" style="left:183px;top:316px;font-size:10.6px;color:#1a1a1a;">通用串行总线控制器</div>
<div class="a" style="left:185px;top:332px;width:5px;height:4px;background:#7a7a7a;border-radius:1px"></div>
<div class="a" style="left:184px;top:335px;width:7px;height:7px;background:#3a3a3a;border-radius:1px 1px 2px 2px"></div>
<div class="a" style="left:186px;top:342px;width:2px;height:3px;background:#3a3a3a"></div>
<div class="a nw" style="left:200px;top:332px;font-size:10.6px;color:#1a1a1a;">Intel(R) USB 3.10 可扩展主机控制器 - 1.20 (Microsoft)</div>
<div class="a" style="left:185px;top:348px;width:5px;height:4px;background:#7a7a7a;border-radius:1px"></div>
<div class="a" style="left:184px;top:351px;width:7px;height:7px;background:#3a3a3a;border-radius:1px 1px 2px 2px"></div>
<div class="a" style="left:186px;top:358px;width:2px;height:3px;background:#3a3a3a"></div>
<div class="a nw" style="left:200px;top:348px;font-size:10.6px;color:#1a1a1a;">Intel(R) USB 3.20 可扩展主机控制器 - 1.20 (Microsoft)</div>
<div class="a" style="left:185px;top:364px;width:5px;height:4px;background:#7a7a7a;border-radius:1px"></div>
<div class="a" style="left:184px;top:367px;width:7px;height:7px;background:#3a3a3a;border-radius:1px 1px 2px 2px"></div>
<div class="a" style="left:186px;top:374px;width:2px;height:3px;background:#3a3a3a"></div>
<div class="a nw" style="left:200px;top:364px;font-size:10.6px;color:#1a1a1a;">USB Composite Device</div>
<div class="a" style="left:185px;top:380px;width:5px;height:4px;background:#7a7a7a;border-radius:1px"></div>
<div class="a" style="left:184px;top:383px;width:7px;height:7px;background:#3a3a3a;border-radius:1px 1px 2px 2px"></div>
<div class="a" style="left:186px;top:390px;width:2px;height:3px;background:#3a3a3a"></div>
<div class="a nw" style="left:200px;top:380px;font-size:10.6px;color:#1a1a1a;">USB Composite Device</div>
<div class="a" style="left:185px;top:396px;width:5px;height:4px;background:#7a7a7a;border-radius:1px"></div>
<div class="a" style="left:184px;top:399px;width:7px;height:7px;background:#3a3a3a;border-radius:1px 1px 2px 2px"></div>
<div class="a" style="left:186px;top:406px;width:2px;height:3px;background:#3a3a3a"></div>
<div class="a nw" style="left:200px;top:396px;font-size:10.6px;color:#1a1a1a;">USB 根集线器(USB 3.0)</div>
<div class="a" style="left:185px;top:412px;width:5px;height:4px;background:#7a7a7a;border-radius:1px"></div>
<div class="a" style="left:184px;top:415px;width:7px;height:7px;background:#3a3a3a;border-radius:1px 1px 2px 2px"></div>
<div class="a" style="left:186px;top:422px;width:2px;height:3px;background:#3a3a3a"></div>
<div class="a nw" style="left:200px;top:412px;font-size:10.6px;color:#1a1a1a;">USB 根集线器(USB 3.0)</div>
<div class="a" style="left:185px;top:428px;width:5px;height:4px;background:#7a7a7a;border-radius:1px"></div>
<div class="a" style="left:184px;top:431px;width:7px;height:7px;background:#3a3a3a;border-radius:1px 1px 2px 2px"></div>
<div class="a" style="left:186px;top:438px;width:2px;height:3px;background:#3a3a3a"></div>
<div class="a nw" style="left:200px;top:428px;font-size:10.6px;color:#1a1a1a;">USB4 根路由器</div>
<div class="a" style="left:185px;top:444px;width:5px;height:4px;background:#7a7a7a;border-radius:1px"></div>
<div class="a" style="left:184px;top:447px;width:7px;height:7px;background:#3a3a3a;border-radius:1px 1px 2px 2px"></div>
<div class="a" style="left:186px;top:454px;width:2px;height:3px;background:#3a3a3a"></div>
<div class="a nw" style="left:200px;top:444px;font-size:10.6px;color:#1a1a1a;">USB4(TM) 主机路由器 (Microsoft)</div>
<div class="a nw" style="left:149px;top:458px;font-size:11px;color:#555">⌄</div>
<div class="a" style="left:168px;top:460px;width:5px;height:4px;background:#7a7a7a;border-radius:1px"></div>
<div class="a" style="left:167px;top:463px;width:7px;height:7px;background:#3a3a3a;border-radius:1px 1px 2px 2px"></div>
<div class="a" style="left:169px;top:470px;width:2px;height:3px;background:#3a3a3a"></div>
<div class="a nw" style="left:183px;top:460px;font-size:10.6px;color:#1a1a1a;">通用串行总线设备</div>
<div class="a" style="left:185px;top:476px;width:5px;height:4px;background:#7a7a7a;border-radius:1px"></div>
<div class="a" style="left:184px;top:479px;width:7px;height:7px;background:#3a3a3a;border-radius:1px 1px 2px 2px"></div>
<div class="a" style="left:186px;top:486px;width:2px;height:3px;background:#3a3a3a"></div>
<div class="a nw" style="left:200px;top:476px;font-size:10.6px;color:#1a1a1a;">Camera DFU Device</div>
<div class="a nw" style="left:151px;top:491px;font-size:12px;color:#888">›</div>
<div class="a" style="left:165px;top:496px;width:13px;height:8px;background:#c0c8d0;border:1px solid #555"></div>
<div class="a nw" style="left:183px;top:492px;font-size:10.6px;color:#1a1a1a;">图像设备</div>
<div class="a nw" style="left:151px;top:507px;font-size:12px;color:#888">›</div>
<div class="a" style="left:165px;top:509px;width:13px;height:10px;background:#40a8e8"></div>
<div class="a" style="left:167px;top:518px;width:9px;height:3px;background:#30a030"></div>
<div class="a nw" style="left:183px;top:508px;font-size:10.6px;color:#1a1a1a;">网络适配器</div>
<div class="a nw" style="left:151px;top:523px;font-size:12px;color:#888">›</div>
<div class="a" style="left:165px;top:525px;width:6px;height:12px;background:#2a4a6a"></div>
<div class="a" style="left:168px;top:528px;width:11px;height:8px;background:#50b0f0"></div>
<div class="a nw" style="left:183px;top:524px;font-size:10.6px;color:#1a1a1a;">系统设备</div>
<div class="a nw" style="left:151px;top:539px;font-size:12px;color:#888">›</div>
<div class="a" style="left:164px;top:541px;width:15px;height:10px;background:#40a0e0;border:1px solid #2a6a9a"></div>
<div class="a" style="left:169px;top:551px;width:5px;height:2px;background:#555"></div>
<div class="a nw" style="left:183px;top:540px;font-size:10.6px;color:#1a1a1a;">显示适配器</div>
<div class="a nw" style="left:151px;top:555px;font-size:12px;color:#888">›</div>
<div class="a" style="left:167px;top:558px;width:9px;height:11px;background:#b0b0b0;clip-path:polygon(0 40%,100% 0,100% 100%,0 100%)"></div>
<div class="a nw" style="left:183px;top:556px;font-size:10.6px;color:#1a1a1a;">音频处理对象(APO)</div>
<div class="a" style="left:139px;top:564px;width:345px;height:21px;background:#f0f0f0;border-radius:0 0 7px 0"></div>
<div class="a" style="left:288px;top:566px;width:1px;height:17px;background:#e0e0e0"></div>
<div class="a" style="left:400px;top:566px;width:1px;height:17px;background:#e0e0e0"></div>
<div class="a" style="left:467px;top:153px;width:17px;height:411px;background:#fbfbfb"></div>
<div class="a" style="left:471px;top:313px;width:7px;height:211px;background:#8a8a8a;border-radius:3px"></div>
<div class="a" style="left:378px;top:330px;width:10px;height:32px;background:#fff"></div>
<div class="a" style="left:168px;top:329px;width:217px;height:133px;border:3px solid #ea4a62;border-radius:3px"></div>
<div class="a" style="left:3px;top:32px;width:136px;height:946px;background:#000"></div>
<!-- cmd -->
<div class="a" style="left:1126px;top:33px;width:526px;height:905px;background:#0c0c0c;border-top:2px solid #6a6a6a"></div>
<div class="a" style="left:1640px;top:69px;width:12px;height:869px;background:#262626"></div>
<div class="a" style="left:1126px;top:35px;width:526px;height:35px;background:#2e2e2e"></div>
<div class="a" style="left:1136px;top:42px;width:212px;height:28px;background:#0c0c0c;border-radius:7px 7px 0 0"></div>
<div class="a" style="left:1143px;top:49px;width:14px;height:12px;background:#0c0c0c;border:1px solid #9a9a9a;border-top:3px solid #9a9a9a"></div>
<div class="a nw" style="left:1166px;top:49px;font-size:11px;color:#f0f0f0">C:\WINDOWS\system32\cmd.</div>
<div class="a nw" style="left:1323px;top:47px;font-size:12px;color:#d8d8d8">✕</div>
<div class="a nw" style="left:1362px;top:46px;font-size:16px;color:#d0d0d0">+</div>
<div class="a" style="left:1383px;top:46px;width:1px;height:18px;background:#444"></div>
<div class="a nw" style="left:1390px;top:45px;font-size:14px;color:#d0d0d0">⌄</div>
<div class="a" style="left:1546px;top:52px;width:10px;height:2px;background:#d8d8d8"></div>
<div class="a" style="left:1587px;top:47px;width:11px;height:11px;border:1.5px solid #d8d8d8;border-radius:1px"></div>
<div class="a nw" style="left:1627px;top:43px;font-size:14px;color:#e0e0e0">✕</div>
<div class="a nw" style="left:1641px;top:72px;font-size:9px;color:#9a9a9a">▲</div>
<div class="a nw" style="left:1135.3px;top:75.5px;font-size:15px;color:#d0d0d0;">无</div>
<div class="a nw" style="left:1151.88px;top:75.5px;font-size:15px;color:#d0d0d0;">线</div>
<div class="a nw" style="left:1168.46px;top:75.5px;font-size:15px;color:#d0d0d0;">局</div>
<div class="a nw" style="left:1185.04px;top:75.5px;font-size:15px;color:#d0d0d0;">域</div>
<div class="a nw" style="left:1201.62px;top:75.5px;font-size:15px;color:#d0d0d0;">网</div>
<div class="a nw" style="left:1218.2px;top:75.5px;font-size:15px;color:#d0d0d0;">适</div>
<div class="a nw" style="left:1234.78px;top:75.5px;font-size:15px;color:#d0d0d0;">配</div>
<div class="a nw" style="left:1251.36px;top:75.5px;font-size:15px;color:#d0d0d0;">器</div>
<div class="a nw" style="left:1267.24px;top:78.5px;font-family:'Liberation Mono',monospace;font-size:13.8px;color:#d0d0d0;text-shadow:0.4px 0 0 #d0d0d0;"> WLAN:</div>
<div class="a nw" style="left:1160.17px;top:108.68px;font-size:15px;color:#d0d0d0;">连</div>
<div class="a nw" style="left:1176.75px;top:108.68px;font-size:15px;color:#d0d0d0;">接</div>
<div class="a nw" style="left:1193.33px;top:108.68px;font-size:15px;color:#d0d0d0;">特</div>
<div class="a nw" style="left:1209.91px;top:108.68px;font-size:15px;color:#d0d0d0;">定</div>
<div class="a nw" style="left:1226.49px;top:108.68px;font-size:15px;color:#d0d0d0;">的</div>
<div class="a nw" style="left:1242.37px;top:111.68px;font-family:'Liberation Mono',monospace;font-size:13.8px;color:#d0d0d0;text-shadow:0.4px 0 0 #d0d0d0;"> DNS </div>
<div class="a nw" style="left:1284.52px;top:108.68px;font-size:15px;color:#d0d0d0;">后</div>
<div class="a nw" style="left:1301.1px;top:108.68px;font-size:15px;color:#d0d0d0;">缀</div>
<div class="a nw" style="left:1316.98px;top:111.68px;font-family:'Liberation Mono',monospace;font-size:13.8px;color:#d0d0d0;text-shadow:0.4px 0 0 #d0d0d0;"> . . . . . . . :</div>
<div class="a nw" style="left:1160.17px;top:125.27px;font-size:15px;color:#d0d0d0;">本</div>
<div class="a nw" style="left:1176.75px;top:125.27px;font-size:15px;color:#d0d0d0;">地</div>
<div class="a nw" style="left:1193.33px;top:125.27px;font-size:15px;color:#d0d0d0;">链</div>
<div class="a nw" style="left:1209.91px;top:125.27px;font-size:15px;color:#d0d0d0;">接</div>
<div class="a nw" style="left:1225.79px;top:128.27px;font-family:'Liberation Mono',monospace;font-size:13.8px;color:#d0d0d0;text-shadow:0.4px 0 0 #d0d0d0;"> IPv6 </div>
<div class="a nw" style="left:1276.23px;top:125.27px;font-size:15px;color:#d0d0d0;">地</div>
<div class="a nw" style="left:1292.81px;top:125.27px;font-size:15px;color:#d0d0d0;">址</div>
<div class="a nw" style="left:1308.69px;top:128.27px;font-family:'Liberation Mono',monospace;font-size:13.8px;color:#d0d0d0;text-shadow:0.4px 0 0 #d0d0d0;">. . . . . . . . : fe80::4acb:9baf:ac2c:</div>
<div class="a nw" style="left:1134.6px;top:144.86px;font-family:'Liberation Mono',monospace;font-size:13.8px;color:#d0d0d0;text-shadow:0.4px 0 0 #d0d0d0;">53e0%11</div>
<div class="a nw" style="left:1134.6px;top:161.45px;font-family:'Liberation Mono',monospace;font-size:13.8px;color:#d0d0d0;text-shadow:0.4px 0 0 #d0d0d0;">   IPv4 </div>
<div class="a nw" style="left:1201.62px;top:158.45px;font-size:15px;color:#d0d0d0;">地</div>
<div class="a nw" style="left:1218.2px;top:158.45px;font-size:15px;color:#d0d0d0;">址</div>
<div class="a nw" style="left:1234.08px;top:161.45px;font-family:'Liberation Mono',monospace;font-size:13.8px;color:#d0d0d0;text-shadow:0.4px 0 0 #d0d0d0;"> . . . . . . . . . . . . : 192.168.1.53</div>
<div class="a nw" style="left:1160.17px;top:175.04px;font-size:15px;color:#d0d0d0;">子</div>
<div class="a nw" style="left:1176.75px;top:175.04px;font-size:15px;color:#d0d0d0;">网</div>
<div class="a nw" style="left:1193.33px;top:175.04px;font-size:15px;color:#d0d0d0;">掩</div>
<div class="a nw" style="left:1209.91px;top:175.04px;font-size:15px;color:#d0d0d0;">码</div>
<div class="a nw" style="left:1225.79px;top:178.04px;font-family:'Liberation Mono',monospace;font-size:13.8px;color:#d0d0d0;text-shadow:0.4px 0 0 #d0d0d0;">  . . . . . . . . . . . . : 255.255.255.0</div>
<div class="a nw" style="left:1160.17px;top:191.63px;font-size:15px;color:#d0d0d0;">默</div>
<div class="a nw" style="left:1176.75px;top:191.63px;font-size:15px;color:#d0d0d0;">认</div>
<div class="a nw" style="left:1193.33px;top:191.63px;font-size:15px;color:#d0d0d0;">网</div>
<div class="a nw" style="left:1209.91px;top:191.63px;font-size:15px;color:#d0d0d0;">关</div>
<div class="a nw" style="left:1225.79px;top:194.63px;font-family:'Liberation Mono',monospace;font-size:13.8px;color:#d0d0d0;text-shadow:0.4px 0 0 #d0d0d0;">. . . . . . . . . . . . . : </div>
<div class="a nw" style="left:1135.3px;top:224.81px;font-size:15px;color:#d0d0d0;">以</div>
<div class="a nw" style="left:1151.88px;top:224.81px;font-size:15px;color:#d0d0d0;">太</div>
<div class="a nw" style="left:1168.46px;top:224.81px;font-size:15px;color:#d0d0d0;">网</div>
<div class="a nw" style="left:1185.04px;top:224.81px;font-size:15px;color:#d0d0d0;">适</div>
<div class="a nw" style="left:1201.62px;top:224.81px;font-size:15px;color:#d0d0d0;">配</div>
<div class="a nw" style="left:1218.2px;top:224.81px;font-size:15px;color:#d0d0d0;">器</div>
<div class="a nw" style="left:1234.08px;top:227.81px;font-family:'Liberation Mono',monospace;font-size:13.8px;color:#d0d0d0;text-shadow:0.4px 0 0 #d0d0d0;"> VMware Network Adapter VMnet1:</div>
<div class="a nw" style="left:1160.17px;top:257.99px;font-size:15px;color:#d0d0d0;">连</div>
<div class="a nw" style="left:1176.75px;top:257.99px;font-size:15px;color:#d0d0d0;">接</div>
<div class="a nw" style="left:1193.33px;top:257.99px;font-size:15px;color:#d0d0d0;">特</div>
<div class="a nw" style="left:1209.91px;top:257.99px;font-size:15px;color:#d0d0d0;">定</div>
<div class="a nw" style="left:1226.49px;top:257.99px;font-size:15px;color:#d0d0d0;">的</div>
<div class="a nw" style="left:1242.37px;top:260.99px;font-family:'Liberation Mono',monospace;font-size:13.8px;color:#d0d0d0;text-shadow:0.4px 0 0 #d0d0d0;"> DNS </div>
<div class="a nw" style="left:1284.52px;top:257.99px;font-size:15px;color:#d0d0d0;">后</div>
<div class="a nw" style="left:1301.1px;top:257.99px;font-size:15px;color:#d0d0d0;">缀</div>
<div class="a nw" style="left:1316.98px;top:260.99px;font-family:'Liberation Mono',monospace;font-size:13.8px;color:#d0d0d0;text-shadow:0.4px 0 0 #d0d0d0;"> . . . . . . . :</div>
<div class="a nw" style="left:1160.17px;top:274.58px;font-size:15px;color:#d0d0d0;">本</div>
<div class="a nw" style="left:1176.75px;top:274.58px;font-size:15px;color:#d0d0d0;">地</div>
<div class="a nw" style="left:1193.33px;top:274.58px;font-size:15px;color:#d0d0d0;">链</div>
<div class="a nw" style="left:1209.91px;top:274.58px;font-size:15px;color:#d0d0d0;">接</div>
<div class="a nw" style="left:1225.79px;top:277.58px;font-family:'Liberation Mono',monospace;font-size:13.8px;color:#d0d0d0;text-shadow:0.4px 0 0 #d0d0d0;"> IPv6 </div>
<div class="a nw" style="left:1276.23px;top:274.58px;font-size:15px;color:#d0d0d0;">地</div>
<div class="a nw" style="left:1292.81px;top:274.58px;font-size:15px;color:#d0d0d0;">址</div>
<div class="a nw" style="left:1308.69px;top:277.58px;font-family:'Liberation Mono',monospace;font-size:13.8px;color:#d0d0d0;text-shadow:0.4px 0 0 #d0d0d0;">. . . . . . . . : fe80::6c3e:1a2b:77f1:</div>
<div class="a nw" style="left:1134.6px;top:294.17px;font-family:'Liberation Mono',monospace;font-size:13.8px;color:#d0d0d0;text-shadow:0.4px 0 0 #d0d0d0;">a703%9</div>
<div class="a nw" style="left:1134.6px;top:310.76px;font-family:'Liberation Mono',monospace;font-size:13.8px;color:#d0d0d0;text-shadow:0.4px 0 0 #d0d0d0;">   IPv4 </div>
<div class="a nw" style="left:1201.62px;top:307.76px;font-size:15px;color:#d0d0d0;">地</div>
<div class="a nw" style="left:1218.2px;top:307.76px;font-size:15px;color:#d0d0d0;">址</div>
<div class="a nw" style="left:1234.08px;top:310.76px;font-family:'Liberation Mono',monospace;font-size:13.8px;color:#d0d0d0;text-shadow:0.4px 0 0 #d0d0d0;"> . . . . . . . . . . . . : 192.168.56.1</div>
<div class="a nw" style="left:1160.17px;top:324.35px;font-size:15px;color:#d0d0d0;">子</div>
<div class="a nw" style="left:1176.75px;top:324.35px;font-size:15px;color:#d0d0d0;">网</div>
<div class="a nw" style="left:1193.33px;top:324.35px;font-size:15px;color:#d0d0d0;">掩</div>
<div class="a nw" style="left:1209.91px;top:324.35px;font-size:15px;color:#d0d0d0;">码</div>
<div class="a nw" style="left:1225.79px;top:327.35px;font-family:'Liberation Mono',monospace;font-size:13.8px;color:#d0d0d0;text-shadow:0.4px 0 0 #d0d0d0;">  . . . . . . . . . . . . : 255.255.255.0</div>
<div class="a nw" style="left:1160.17px;top:340.94px;font-size:15px;color:#d0d0d0;">默</div>
<div class="a nw" style="left:1176.75px;top:340.94px;font-size:15px;color:#d0d0d0;">认</div>
<div class="a nw" style="left:1193.33px;top:340.94px;font-size:15px;color:#d0d0d0;">网</div>
<div class="a nw" style="left:1209.91px;top:340.94px;font-size:15px;color:#d0d0d0;">关</div>
<div class="a nw" style="left:1225.79px;top:343.94px;font-family:'Liberation Mono',monospace;font-size:13.8px;color:#d0d0d0;text-shadow:0.4px 0 0 #d0d0d0;">. . . . . . . . . . . . . :</div>
<div class="a nw" style="left:1135.3px;top:374.12px;font-size:15px;color:#d0d0d0;">以</div>
<div class="a nw" style="left:1151.88px;top:374.12px;font-size:15px;color:#d0d0d0;">太</div>
<div class="a nw" style="left:1168.46px;top:374.12px;font-size:15px;color:#d0d0d0;">网</div>
<div class="a nw" style="left:1185.04px;top:374.12px;font-size:15px;color:#d0d0d0;">适</div>
<div class="a nw" style="left:1201.62px;top:374.12px;font-size:15px;color:#d0d0d0;">配</div>
<div class="a nw" style="left:1218.2px;top:374.12px;font-size:15px;color:#d0d0d0;">器</div>
<div class="a nw" style="left:1234.08px;top:377.12px;font-family:'Liberation Mono',monospace;font-size:13.8px;color:#d0d0d0;text-shadow:0.4px 0 0 #d0d0d0;"> VMware Network Adapter VMnet8:</div>
<div class="a nw" style="left:1160.17px;top:407.3px;font-size:15px;color:#d0d0d0;">连</div>
<div class="a nw" style="left:1176.75px;top:407.3px;font-size:15px;color:#d0d0d0;">接</div>
<div class="a nw" style="left:1193.33px;top:407.3px;font-size:15px;color:#d0d0d0;">特</div>
<div class="a nw" style="left:1209.91px;top:407.3px;font-size:15px;color:#d0d0d0;">定</div>
<div class="a nw" style="left:1226.49px;top:407.3px;font-size:15px;color:#d0d0d0;">的</div>
<div class="a nw" style="left:1242.37px;top:410.3px;font-family:'Liberation Mono',monospace;font-size:13.8px;color:#d0d0d0;text-shadow:0.4px 0 0 #d0d0d0;"> DNS </div>
<div class="a nw" style="left:1284.52px;top:407.3px;font-size:15px;color:#d0d0d0;">后</div>
<div class="a nw" style="left:1301.1px;top:407.3px;font-size:15px;color:#d0d0d0;">缀</div>
<div class="a nw" style="left:1316.98px;top:410.3px;font-family:'Liberation Mono',monospace;font-size:13.8px;color:#d0d0d0;text-shadow:0.4px 0 0 #d0d0d0;"> . . . . . . . :</div>
<div class="a nw" style="left:1160.17px;top:423.89px;font-size:15px;color:#d0d0d0;">本</div>
<div class="a nw" style="left:1176.75px;top:423.89px;font-size:15px;color:#d0d0d0;">地</div>
<div class="a nw" style="left:1193.33px;top:423.89px;font-size:15px;color:#d0d0d0;">链</div>
<div class="a nw" style="left:1209.91px;top:423.89px;font-size:15px;color:#d0d0d0;">接</div>
<div class="a nw" style="left:1225.79px;top:426.89px;font-family:'Liberation Mono',monospace;font-size:13.8px;color:#d0d0d0;text-shadow:0.4px 0 0 #d0d0d0;"> IPv6 </div>
<div class="a nw" style="left:1276.23px;top:423.89px;font-size:15px;color:#d0d0d0;">地</div>
<div class="a nw" style="left:1292.81px;top:423.89px;font-size:15px;color:#d0d0d0;">址</div>
<div class="a nw" style="left:1308.69px;top:426.89px;font-family:'Liberation Mono',monospace;font-size:13.8px;color:#d0d0d0;text-shadow:0.4px 0 0 #d0d0d0;">. . . . . . . . : fe80::2d1c:5e8a:91b4:</div>
<div class="a nw" style="left:1134.6px;top:443.48px;font-family:'Liberation Mono',monospace;font-size:13.8px;color:#d0d0d0;text-shadow:0.4px 0 0 #d0d0d0;">27a4%10</div>
<div class="a nw" style="left:1134.6px;top:460.07px;font-family:'Liberation Mono',monospace;font-size:13.8px;color:#d0d0d0;text-shadow:0.4px 0 0 #d0d0d0;">   IPv4 </div>
<div class="a nw" style="left:1201.62px;top:457.07px;font-size:15px;color:#d0d0d0;">地</div>
<div class="a nw" style="left:1218.2px;top:457.07px;font-size:15px;color:#d0d0d0;">址</div>
<div class="a nw" style="left:1234.08px;top:460.07px;font-family:'Liberation Mono',monospace;font-size:13.8px;color:#d0d0d0;text-shadow:0.4px 0 0 #d0d0d0;"> . . . . . . . . . . . . : 192.168.111.1</div>
<div class="a nw" style="left:1160.17px;top:473.66px;font-size:15px;color:#d0d0d0;">子</div>
<div class="a nw" style="left:1176.75px;top:473.66px;font-size:15px;color:#d0d0d0;">网</div>
<div class="a nw" style="left:1193.33px;top:473.66px;font-size:15px;color:#d0d0d0;">掩</div>
<div class="a nw" style="left:1209.91px;top:473.66px;font-size:15px;color:#d0d0d0;">码</div>
<div class="a nw" style="left:1225.79px;top:476.66px;font-family:'Liberation Mono',monospace;font-size:13.8px;color:#d0d0d0;text-shadow:0.4px 0 0 #d0d0d0;">  . . . . . . . . . . . . : 255.255.255.0</div>
<div class="a nw" style="left:1160.17px;top:490.25px;font-size:15px;color:#d0d0d0;">默</div>
<div class="a nw" style="left:1176.75px;top:490.25px;font-size:15px;color:#d0d0d0;">认</div>
<div class="a nw" style="left:1193.33px;top:490.25px;font-size:15px;color:#d0d0d0;">网</div>
<div class="a nw" style="left:1209.91px;top:490.25px;font-size:15px;color:#d0d0d0;">关</div>
<div class="a nw" style="left:1225.79px;top:493.25px;font-family:'Liberation Mono',monospace;font-size:13.8px;color:#d0d0d0;text-shadow:0.4px 0 0 #d0d0d0;">. . . . . . . . . . . . . :</div>
<div class="a nw" style="left:1135.3px;top:523.43px;font-size:15px;color:#d0d0d0;">以</div>
<div class="a nw" style="left:1151.88px;top:523.43px;font-size:15px;color:#d0d0d0;">太</div>
<div class="a nw" style="left:1168.46px;top:523.43px;font-size:15px;color:#d0d0d0;">网</div>
<div class="a nw" style="left:1185.04px;top:523.43px;font-size:15px;color:#d0d0d0;">适</div>
<div class="a nw" style="left:1201.62px;top:523.43px;font-size:15px;color:#d0d0d0;">配</div>
<div class="a nw" style="left:1218.2px;top:523.43px;font-size:15px;color:#d0d0d0;">器</div>
<div class="a nw" style="left:1243.07px;top:523.43px;font-size:15px;color:#d0d0d0;">蓝</div>
<div class="a nw" style="left:1259.65px;top:523.43px;font-size:15px;color:#d0d0d0;">牙</div>
<div class="a nw" style="left:1276.23px;top:523.43px;font-size:15px;color:#d0d0d0;">网</div>
<div class="a nw" style="left:1292.81px;top:523.43px;font-size:15px;color:#d0d0d0;">络</div>
<div class="a nw" style="left:1309.39px;top:523.43px;font-size:15px;color:#d0d0d0;">连</div>
<div class="a nw" style="left:1325.97px;top:523.43px;font-size:15px;color:#d0d0d0;">接</div>
<div class="a nw" style="left:1341.85px;top:526.43px;font-family:'Liberation Mono',monospace;font-size:13.8px;color:#d0d0d0;text-shadow:0.4px 0 0 #d0d0d0;">:</div>
<div class="a nw" style="left:1160.17px;top:556.61px;font-size:15px;color:#d0d0d0;">媒</div>
<div class="a nw" style="left:1176.75px;top:556.61px;font-size:15px;color:#d0d0d0;">体</div>
<div class="a nw" style="left:1193.33px;top:556.61px;font-size:15px;color:#d0d0d0;">状</div>
<div class="a nw" style="left:1209.91px;top:556.61px;font-size:15px;color:#d0d0d0;">态</div>
<div class="a nw" style="left:1225.79px;top:559.61px;font-family:'Liberation Mono',monospace;font-size:13.8px;color:#d0d0d0;text-shadow:0.4px 0 0 #d0d0d0;">  . . . . . . . . . . . . : </div>
<div class="a nw" style="left:1458.61px;top:556.61px;font-size:15px;color:#d0d0d0;">媒</div>
<div class="a nw" style="left:1475.19px;top:556.61px;font-size:15px;color:#d0d0d0;">体</div>
<div class="a nw" style="left:1491.77px;top:556.61px;font-size:15px;color:#d0d0d0;">已</div>
<div class="a nw" style="left:1508.35px;top:556.61px;font-size:15px;color:#d0d0d0;">断</div>
<div class="a nw" style="left:1524.93px;top:556.61px;font-size:15px;color:#d0d0d0;">开</div>
<div class="a nw" style="left:1541.51px;top:556.61px;font-size:15px;color:#d0d0d0;">连</div>
<div class="a nw" style="left:1558.09px;top:556.61px;font-size:15px;color:#d0d0d0;">接</div>
<div class="a nw" style="left:1160.17px;top:573.2px;font-size:15px;color:#d0d0d0;">连</div>
<div class="a nw" style="left:1176.75px;top:573.2px;font-size:15px;color:#d0d0d0;">接</div>
<div class="a nw" style="left:1193.33px;top:573.2px;font-size:15px;color:#d0d0d0;">特</div>
<div class="a nw" style="left:1209.91px;top:573.2px;font-size:15px;color:#d0d0d0;">定</div>
<div class="a nw" style="left:1226.49px;top:573.2px;font-size:15px;color:#d0d0d0;">的</div>
<div class="a nw" style="left:1242.37px;top:576.2px;font-family:'Liberation Mono',monospace;font-size:13.8px;color:#d0d0d0;text-shadow:0.4px 0 0 #d0d0d0;"> DNS </div>
<div class="a nw" style="left:1284.52px;top:573.2px;font-size:15px;color:#d0d0d0;">后</div>
<div class="a nw" style="left:1301.1px;top:573.2px;font-size:15px;color:#d0d0d0;">缀</div>
<div class="a nw" style="left:1316.98px;top:576.2px;font-family:'Liberation Mono',monospace;font-size:13.8px;color:#d0d0d0;text-shadow:0.4px 0 0 #d0d0d0;"> . . . . . . . :</div>
<div class="a nw" style="left:1134.6px;top:609.38px;font-family:'Liberation Mono',monospace;font-size:13.8px;color:#d0d0d0;text-shadow:0.4px 0 0 #d0d0d0;">C:\Users\admin&gt;</div>
<div class="a nw" style="left:1134.6px;top:625.97px;font-family:'Liberation Mono',monospace;font-size:13.8px;color:#d0d0d0;text-shadow:0.4px 0 0 #d0d0d0;">C:\Users\admin&gt;</div>
<div class="a nw" style="left:1134.6px;top:642.56px;font-family:'Liberation Mono',monospace;font-size:13.8px;color:#d0d0d0;text-shadow:0.4px 0 0 #d0d0d0;">C:\Users\admin&gt;a</div>
<!-- dm2 -->
<div class="a" style="left:1426px;top:184px;width:361px;height:476px;background:#fff;border-top:3px solid #dcdcdc;border-left:1px solid #9a9a9a"></div>
<div class="a" style="left:1427px;top:187px;width:360px;height:32px;background:#4b4a48"></div>
<div class="a" style="left:1435px;top:197px;width:12px;height:8px;background:#f4f4f4;border-radius:1px"></div>
<div class="a" style="left:1438px;top:191px;width:6px;height:7px;border:1px solid #e0e0e0;border-bottom:none"></div>
<div class="a" style="left:1439px;top:193px;width:1.5px;height:1.5px;background:#3c3"></div>
<div class="a nw" style="left:1454px;top:195px;font-size:12.5px;color:#f2f2f2">设备管理器</div>
<div class="a" style="left:1427px;top:242px;width:360px;height:1px;background:#c4c8d0"></div>
<svg class="a" style="left:1430px;top:247px" width="44" height="17"><path d="M1 8.5L8 2v4h9v5H8v4z" fill="#a8a8a8" stroke="#6a6a6a" stroke-width="1"/><path d="M43 8.5L36 2v4h-9v5h9v4z" fill="#a8a8a8" stroke="#6a6a6a" stroke-width="1"/></svg>
<div class="a" style="left:1475px;top:247px;width:1px;height:18px;background:#888"></div>
<div class="a" style="left:1484px;top:250px;width:16px;height:13px;background:#e8eef4;border:1px solid #6a7a8a;border-top:3px solid #6a7a8a"></div>
<div class="a" style="left:1487px;top:256px;width:3px;height:3px;background:#2a2"></div>
<div class="a" style="left:1506px;top:247px;width:1px;height:18px;background:#888"></div>
<div class="a" style="left:1516px;top:247px;width:12px;height:17px;background:#2a4ac0;border:1px solid #12258a"></div>
<div class="a nw" style="left:1518px;top:247px;font-size:13px;color:#fff;font-weight:bold">?</div>
<div class="a" style="left:1538px;top:250px;width:16px;height:13px;background:#e8eef4;border:1px solid #6a7a8a;border-top:3px solid #6a7a8a"></div>
<div class="a" style="left:1541px;top:256px;width:3px;height:3px;background:#2a2"></div>
<div class="a" style="left:1560px;top:247px;width:1px;height:18px;background:#888"></div>
<div class="a" style="left:1569px;top:249px;width:16px;height:11px;background:#7cc8f0;border:1px solid #3a88c0;border-radius:2px"></div>
<div class="a" style="left:1570px;top:261px;width:14px;height:1.5px;background:#3a88c0"></div>
<div class="a" style="left:1427px;top:265px;width:360px;height:8px;background:#efefef"></div>
<div class="a" style="left:1427px;top:273px;width:360px;height:2px;background:#6d6d6d"></div>
<div class="a nw" style="left:1454px;top:273.5px;font-size:16px;color:#555">›</div>
<div class="a" style="left:1468px;top:278.5px;width:16px;height:10px;background:#e8e8e8;border:1px solid #444;border-radius:1px;background-image:repeating-linear-gradient(90deg,#999 0 1px,transparent 1px 3px)"></div>
<div class="a nw" style="left:1489px;top:276.0px;font-size:12.8px;color:#111;">键盘</div>
<div class="a nw" style="left:1454px;top:293.5px;font-size:16px;color:#555">›</div>
<div class="a" style="left:1469px;top:295.5px;width:12px;height:16px;background:#1a7ae8;border-radius:6px"></div>
<div class="a nw" style="left:1472px;top:296.5px;font-size:11px;color:#fff;font-weight:bold">ᛒ</div>
<div class="a nw" style="left:1489px;top:296.0px;font-size:12.8px;color:#111;">蓝牙</div>
<div class="a nw" style="left:1454px;top:313.5px;font-size:16px;color:#555">›</div>
<div class="a" style="left:1468px;top:317.5px;width:16px;height:12px;background:#d8e0ea;border:1.5px solid #333;border-radius:3px"></div>
<div class="a nw" style="left:1489px;top:316.0px;font-size:12.8px;color:#111;">内存技术设备</div>
<div class="a nw" style="left:1454px;top:333.5px;font-size:16px;color:#555">›</div>
<svg class="a" style="left:1468px;top:335.5px" width="17" height="17" viewBox="0 0 15 15"><path d="M1 2h5l1 1v10H1z" fill="#2b2b2b"/><rect x="2" y="4" width="2" height="3" fill="#3ac03a"/><rect x="0" y="13" width="8" height="2" fill="#555"/><circle cx="10.5" cy="4.5" r="3.8" fill="#fff" stroke="#7aa8e0" stroke-width="1"/><text x="9" y="7" font-size="6" fill="#3a70c0" font-family="Liberation Sans">?</text></svg><div class="a nw" style="left:1489px;top:336.0px;font-size:12.8px;color:#111;">其他设备</div>
<div class="a nw" style="left:1454px;top:353.5px;font-size:16px;color:#555">›</div>
<div class="a" style="left:1468px;top:357.5px;width:16px;height:10px;background:#c8d0d8;border:1px solid #505a64"></div>
<div class="a" style="left:1469px;top:365.5px;width:4px;height:5px;background:#3a5a9a;border-radius:2px"></div>
<div class="a" style="left:1479px;top:365.5px;width:4px;height:5px;background:#3a5a9a;border-radius:2px"></div>
<div class="a nw" style="left:1489px;top:356.0px;font-size:12.8px;color:#111;">人机接口设备</div>
<div class="a nw" style="left:1454px;top:373.5px;font-size:16px;color:#555">›</div>
<div class="a" style="left:1472px;top:375.5px;width:8px;height:15px;background:#2a2a2a"></div>
<div class="a" style="left:1474px;top:378.5px;width:3px;height:3px;background:#2c2"></div>
<div class="a nw" style="left:1489px;top:376.0px;font-size:12.8px;color:#111;">软件设备</div>
<div class="a nw" style="left:1454px;top:393.5px;font-size:16px;color:#555">›</div>
<div class="a" style="left:1471px;top:396.5px;width:8px;height:14px;background:#2a2a2a"></div>
<div class="a" style="left:1473px;top:399.5px;width:3px;height:3px;background:#2c2"></div>
<div class="a" style="left:1479px;top:395.5px;width:5px;height:6px;background:#3a8ae0"></div>
<div class="a nw" style="left:1489px;top:396.0px;font-size:12.8px;color:#111;">软件组件</div>
<div class="a nw" style="left:1454px;top:413.5px;font-size:16px;color:#555">›</div>
<div class="a" style="left:1470px;top:417.5px;width:11px;height:12px;background:#a0a8b0;clip-path:polygon(0 30%,45% 30%,100% 0,100% 100%,45% 70%,0 70%)"></div>
<div class="a nw" style="left:1489px;top:416.0px;font-size:12.8px;color:#111;">声音、视频和游戏控制器</div>
<div class="a nw" style="left:1454px;top:433.5px;font-size:16px;color:#555">›</div>
<div class="a" style="left:1471px;top:435.5px;width:10px;height:16px;background:#a8b8c8;border:1.5px solid #3a4a5a;border-radius:5px"></div>
<div class="a nw" style="left:1489px;top:436.0px;font-size:12.8px;color:#111;">鼠标和其他指针设备</div>
<div class="a nw" style="left:1451px;top:452.5px;font-size:14px;color:#444">⌄</div>
<div class="a" style="left:1473px;top:455.5px;width:6px;height:5px;background:#7a7a7a;border-radius:1px"></div>
<div class="a" style="left:1472px;top:458.5px;width:8px;height:8px;background:#3a3a3a;border-radius:1px 1px 2px 2px"></div>
<div class="a" style="left:1475px;top:467.5px;width:2px;height:3px;background:#3a3a3a"></div>
<div class="a nw" style="left:1489px;top:456.0px;font-size:12.8px;color:#111;">通用串行总线控制器</div>
<div class="a" style="left:1492px;top:475.5px;width:6px;height:5px;background:#7a7a7a;border-radius:1px"></div>
<div class="a" style="left:1491px;top:478.5px;width:8px;height:8px;background:#3a3a3a;border-radius:1px 1px 2px 2px"></div>
<div class="a" style="left:1494px;top:487.5px;width:2px;height:3px;background:#3a3a3a"></div>
<div class="a nw" style="left:1508px;top:476.0px;font-size:12.8px;color:#111;">Intel(R) USB 3.10 可扩展主机控制器 - 1.20 (Microsoft)</div>
<div class="a" style="left:1492px;top:495.5px;width:6px;height:5px;background:#7a7a7a;border-radius:1px"></div>
<div class="a" style="left:1491px;top:498.5px;width:8px;height:8px;background:#3a3a3a;border-radius:1px 1px 2px 2px"></div>
<div class="a" style="left:1494px;top:507.5px;width:2px;height:3px;background:#3a3a3a"></div>
<div class="a nw" style="left:1508px;top:496.0px;font-size:12.8px;color:#111;">Intel(R) USB 3.20 可扩展主机控制器 - 1.20 (Microsoft)</div>
<div class="a" style="left:1492px;top:515.5px;width:6px;height:5px;background:#7a7a7a;border-radius:1px"></div>
<div class="a" style="left:1491px;top:518.5px;width:8px;height:8px;background:#3a3a3a;border-radius:1px 1px 2px 2px"></div>
<div class="a" style="left:1494px;top:527.5px;width:2px;height:3px;background:#3a3a3a"></div>
<div class="a nw" style="left:1508px;top:516.0px;font-size:12.8px;color:#111;">J-Link driver</div>
<div class="a" style="left:1492px;top:535.5px;width:6px;height:5px;background:#7a7a7a;border-radius:1px"></div>
<div class="a" style="left:1491px;top:538.5px;width:8px;height:8px;background:#3a3a3a;border-radius:1px 1px 2px 2px"></div>
<div class="a" style="left:1494px;top:547.5px;width:2px;height:3px;background:#3a3a3a"></div>
<div class="a nw" style="left:1508px;top:536.0px;font-size:12.8px;color:#111;">USB Composite Device</div>
<div class="a" style="left:1492px;top:555.5px;width:6px;height:5px;background:#7a7a7a;border-radius:1px"></div>
<div class="a" style="left:1491px;top:558.5px;width:8px;height:8px;background:#3a3a3a;border-radius:1px 1px 2px 2px"></div>
<div class="a" style="left:1494px;top:567.5px;width:2px;height:3px;background:#3a3a3a"></div>
<div class="a nw" style="left:1508px;top:556.0px;font-size:12.8px;color:#111;">USB Composite Device</div>
<div class="a" style="left:1492px;top:575.5px;width:6px;height:5px;background:#7a7a7a;border-radius:1px"></div>
<div class="a" style="left:1491px;top:578.5px;width:8px;height:8px;background:#3a3a3a;border-radius:1px 1px 2px 2px"></div>
<div class="a" style="left:1494px;top:587.5px;width:2px;height:3px;background:#3a3a3a"></div>
<div class="a nw" style="left:1508px;top:576.0px;font-size:12.8px;color:#111;">USB 根集线器(USB 3.0)</div>
<div class="a" style="left:1492px;top:595.5px;width:6px;height:5px;background:#7a7a7a;border-radius:1px"></div>
<div class="a" style="left:1491px;top:598.5px;width:8px;height:8px;background:#3a3a3a;border-radius:1px 1px 2px 2px"></div>
<div class="a" style="left:1494px;top:607.5px;width:2px;height:3px;background:#3a3a3a"></div>
<div class="a nw" style="left:1508px;top:596.0px;font-size:12.8px;color:#111;">USB 根集线器(USB 3.0)</div>
<div class="a nw" style="left:1451px;top:612.5px;font-size:14px;color:#444">⌄</div>
<div class="a" style="left:1473px;top:615.5px;width:6px;height:5px;background:#7a7a7a;border-radius:1px"></div>
<div class="a" style="left:1472px;top:618.5px;width:8px;height:8px;background:#3a3a3a;border-radius:1px 1px 2px 2px"></div>
<div class="a" style="left:1475px;top:627.5px;width:2px;height:3px;background:#3a3a3a"></div>
<div class="a nw" style="left:1489px;top:616.0px;font-size:12.8px;color:#111;">通用串行总线设备</div>
<div class="a" style="left:1492px;top:635.5px;width:6px;height:5px;background:#7a7a7a;border-radius:1px"></div>
<div class="a" style="left:1491px;top:638.5px;width:8px;height:8px;background:#3a3a3a;border-radius:1px 1px 2px 2px"></div>
<div class="a" style="left:1494px;top:647.5px;width:2px;height:3px;background:#3a3a3a"></div>
<div class="a nw" style="left:1508px;top:636.0px;font-size:12.8px;color:#111;">Camera DFU Device</div>
<div class="a nw" style="left:1454px;top:653.5px;font-size:16px;color:#555">›</div>
<div class="a" style="left:1471px;top:657.5px;width:10px;height:12px;background:#444"></div>
<div class="a nw" style="left:1489px;top:656.0px;font-size:12.8px;color:#111;">生物识别设备</div>
<div class="a" style="left:1426px;top:653px;width:361px;height:5px;background:linear-gradient(#d8d8d8,#b8b8b8)"></div>
<div class="a" style="left:1445px;top:456px;width:286px;height:166px;border:3px solid #ea4a62;border-radius:4px"></div>
<div class="a" style="left:1482px;top:511px;width:111px;height:26px;border:3px solid #ea4a62;border-radius:4px"></div>
<!-- segger -->
<div class="a" style="left:1430px;top:657px;width:354px;height:282px;background:#f0f0f0;border:1px solid #a8a8a8;box-shadow:0 0 3px rgba(0,0,0,.3)"></div>
<div class="a" style="left:1431px;top:658px;width:352px;height:25px;background:#fafafa"></div>
<div class="a" style="left:1438px;top:663px;width:15px;height:15px;background:#1a4ac8;border:1px solid #0a2a8a"></div>
<div class="a nw" style="left:1442px;top:662px;font-size:9px;color:#fff;font-weight:bold">J</div>
<div class="a nw" style="left:1457px;top:664px;font-size:11.6px;color:#a0a0a0">SEGGER J-Link Remote Server V8.1...</div>
<div class="a" style="left:1671px;top:670px;width:11px;height:1px;background:#c8c8c8"></div>
<div class="a" style="left:1714px;top:665px;width:10px;height:10px;border:1px solid #e0e0e0"></div>
<div class="a nw" style="left:1755px;top:662px;font-size:14px;color:#909090">✕</div>
<div class="a" style="left:1431px;top:683px;width:352px;height:24px;background:#fcfcfc"></div>
<div class="a nw" style="left:1438px;top:688px;font-size:11.6px;color:#a0a0a0">File</div>
<div class="a nw" style="left:1470px;top:688px;font-size:11.6px;color:#a0a0a0">Help</div>
<div class="a" style="left:1484px;top:715px;width:247px;height:78px;background:#fff;border-top:2px solid #6a6a6a;border-left:2px solid #6a6a6a"></div>
<div class="a nw" style="left:1508px;top:724px;font-size:9px;color:#111;font-weight:bold">Client</div>
<div class="a nw" style="left:1497px;top:732px;font-size:9px;color:#111;font-weight:bold">Application</div>
<div class="a nw" style="left:1673px;top:724px;font-size:9px;color:#111;font-weight:bold">Remote</div>
<div class="a nw" style="left:1677px;top:732px;font-size:9px;color:#111;font-weight:bold">Server</div>
<div class="a" style="left:1497px;top:748px;width:33px;height:26px;background:linear-gradient(135deg,#9ad0f8,#1a5aa8 60%,#0a2a60);border:2px solid #333;transform:skewY(-6deg)"></div>
<div class="a" style="left:1508px;top:776px;width:14px;height:3px;background:#333;border-radius:2px"></div>
<div class="a" style="left:1528px;top:744px;width:22px;height:32px;background:linear-gradient(90deg,#ddd,#888);border:1px solid #555"></div>
<div class="a" style="left:1532px;top:750px;width:14px;height:3px;background:#555"></div>
<div class="a" style="left:1556px;top:766px;width:117px;height:4px;background:#10a010"></div>
<div class="a" style="left:1679px;top:752px;width:20px;height:28px;background:linear-gradient(90deg,#eee,#777);border:1px solid #555"></div>
<div class="a" style="left:1683px;top:757px;width:12px;height:3px;background:#555"></div>
<div class="a" style="left:1699px;top:760px;width:15px;height:14px;background:#222;transform:rotate(-30deg);border-radius:2px"></div>
<div class="a" style="left:1439px;top:804px;width:336px;height:67px;border:1px solid #dcdcdc;box-shadow:inset 1px 1px 0 #fff"></div>
<div class="a nw" style="left:1447px;top:800px;font-family:'Liberation Mono',monospace;font-size:9.8px;color:#3a3a3a;background:#f0f0f0;letter-spacing:-0.3px;padding:0 2px">Connection information</div>
<div class="a nw" style="left:1448px;top:823px;font-family:'Liberation Mono',monospace;font-size:9.8px;color:#3a3a3a;letter-spacing:-0.3px">Connection type</div>
<div class="a" style="left:1587px;top:818px;width:179px;height:19px;background:#f0f0f0;border:1px solid #7a7a7a"></div>
<div class="a nw" style="left:1590px;top:823px;font-family:'Liberation Mono',monospace;font-size:9.8px;color:#3a3a3a;">LAN</div>
<div class="a nw" style="left:1448px;top:848px;font-family:'Liberation Mono',monospace;font-size:9.8px;color:#3a3a3a;letter-spacing:-0.3px">Client connection string</div>
<div class="a" style="left:1587px;top:843px;width:140px;height:19px;background:#f0f0f0;border:1px solid #7a7a7a"></div>
<div class="a nw" style="left:1590px;top:848px;font-family:'Liberation Mono',monospace;font-size:9.8px;color:#3a3a3a;letter-spacing:-0.5px">ip 192.168.1.57</div>
<div class="a" style="left:1733px;top:843px;width:33px;height:19px;background:#e8e8e8;border:1px solid #b0b0b0"></div>
<div class="a nw" style="left:1737px;top:848px;font-family:'Liberation Mono',monospace;font-size:9.8px;color:#3a3a3a;">Copy</div>
<div class="a" style="left:1438px;top:877px;width:14px;height:14px;background:#fff;border:1px solid #444"></div>
<div class="a nw" style="left:1456px;top:880px;font-family:'Liberation Mono',monospace;font-size:9.8px;color:#3a3a3a;letter-spacing:-0.3px">Stay on top</div>
<div class="a" style="left:1438px;top:896px;width:14px;height:14px;background:#fff;border:1px solid #444"></div>
<div class="a nw" style="left:1456px;top:899px;font-family:'Liberation Mono',monospace;font-size:9.8px;color:#3a3a3a;letter-spacing:-0.3px">Show log</div>
<div class="a" style="left:1431px;top:919px;width:352px;height:1px;background:#d8d8d8"></div>
<div class="a nw" style="left:1433px;top:925px;font-family:'Liberation Mono',monospace;font-size:9.8px;color:#3a3a3a;letter-spacing:-0.3px">Connected to client</div>
<!-- taskbars -->
<div class="a" style="left:140px;top:938px;width:1512px;height:40px;background:#211d1d"></div>
<div class="a" style="left:397px;top:949px;width:10px;height:10px;background:#4cc2f0"></div>
<div class="a" style="left:397px;top:960px;width:10px;height:10px;background:#4cc2f0"></div>
<div class="a" style="left:408px;top:949px;width:10px;height:10px;background:#4cc2f0"></div>
<div class="a" style="left:408px;top:960px;width:10px;height:10px;background:#4cc2f0"></div>
<div class="a" style="left:431px;top:946px;width:192px;height:27px;background:#f4f4f4;border-radius:14px"></div>
<div class="a" style="left:442px;top:953px;width:10px;height:10px;border:2px solid #333;border-radius:50%"></div>
<div class="a" style="left:450px;top:962px;width:5px;height:2px;background:#333;transform:rotate(45deg)"></div>
<div class="a nw" style="left:462px;top:951px;font-size:13px;color:#888">搜索</div>
<svg class="a" style="left:633px;top:948px" width="24" height="24" viewBox="0 0 24 24"><circle cx="14.5" cy="10" r="6.5" stroke="#f08a1a" stroke-width="3.4" fill="none"/><path d="M10 14.5L4 20.5" stroke="#f08a1a" stroke-width="3.6" stroke-linecap="round"/></svg>
<svg class="a" style="left:674px;top:949px" width="22" height="22" viewBox="0 0 22 22"><circle cx="11" cy="11" r="10" fill="#db4437"/><path d="M11 11L2.3 16A10 10 0 0 0 16 19.7z" fill="#0f9d58"/><path d="M11 11L16 19.7A10 10 0 0 0 19.7 6H11z" fill="#f4c20d"/><path d="M11 11H19.7A10 10 0 0 0 2.3 6L6.5 13.5z" fill="#db4437"/><circle cx="11" cy="11" r="4.6" fill="#fff"/><circle cx="11" cy="11" r="3.6" fill="#4285f4"/></svg>
<svg class="a" style="left:712px;top:948px" width="24" height="24" viewBox="0 0 24 24"><circle cx="12" cy="12" r="11" fill="#1d8fe0"/><path d="M23 12A11 11 0 0 0 2 8c3-4 12-5 14 1 1 3-3 4-6 3.5 2 3 8 4 13-.5z" fill="#3ccf8e"/><circle cx="11" cy="14.5" r="3.8" fill="#231f1f"/></svg>
<svg class="a" style="left:752px;top:950px" width="23" height="21" viewBox="0 0 23 21"><path d="M0 2h8l2 2h13v17H0z" fill="#f0b828"/><path d="M0 6h23v15H0z" fill="#ffd350"/><rect x="4" y="13" width="15" height="7" rx="1" fill="#1f78d1"/></svg>
<svg class="a" style="left:790px;top:950px" width="24" height="21" viewBox="0 0 24 21"><path d="M6 4h17v13H6z" fill="#35b8f0"/><path d="M6 4l17 7V4z" fill="#1480d8"/><rect x="1" y="5" width="11" height="12" rx="1.5" fill="#0f64c0"/><circle cx="6.5" cy="11" r="2.8" stroke="#fff" stroke-width="1.6" fill="none"/></svg>
<svg class="a" style="left:830px;top:948px" width="23" height="23" viewBox="0 0 23 23"><circle cx="11.5" cy="11.5" r="10" stroke="#ddd" stroke-width="1.6" fill="#1e1b1b"/><path d="M6 9a4 4 0 0 1 7-4M16.5 8.5a4 4 0 0 1-1 8M11 17a4 4 0 0 1-6-4" stroke="#ddd" stroke-width="1.8" fill="none"/></svg>
<div class="a" style="left:862px;top:942px;width:36px;height:35px;background:#6a3a3e;border-radius:4px"></div>
<svg class="a" style="left:870px;top:949px" width="20" height="21" viewBox="0 0 20 21"><rect x="0" y="0" width="20" height="21" rx="4" fill="#2a94f0"/><path d="M6 4l9 8-3 1 1 5-3-4-2 2z" fill="#fff"/></svg>
<div class="a" style="left:876px;top:975px;width:8px;height:2px;background:#f07a8a"></div>
<svg class="a" style="left:909px;top:951px" width="20" height="18" viewBox="0 0 20 18"><rect width="20" height="18" rx="3" fill="#f6f6f6"/><path d="M4 13V5l6 5 6-5v8" stroke="#e02a2a" stroke-width="2.4" fill="none" stroke-linejoin="round"/></svg>
<svg class="a" style="left:949px;top:949px" width="17" height="22" viewBox="0 0 17 22"><path d="M3 21V7l6-5 6 5v9l-5 4H7l4-4V9L9 7 7 9v12z" stroke="#c8a860" stroke-width="2" fill="none" stroke-linejoin="round"/></svg>
<svg class="a" style="left:988px;top:949px" width="17" height="22" viewBox="0 0 17 22"><path d="M3 21V7l6-5 6 5v9l-5 4H7l4-4V9L9 7 7 9v12z" stroke="#c8a860" stroke-width="2" fill="none" stroke-linejoin="round"/></svg>
<svg class="a" style="left:1025px;top:950px" width="24" height="20" viewBox="0 0 24 20"><ellipse cx="8.5" cy="7" rx="8" ry="6.5" fill="#2ec44a"/><ellipse cx="15.5" cy="12.5" rx="7.5" ry="6" fill="#eee"/><circle cx="13" cy="12" r="1" fill="#888"/><circle cx="18" cy="12" r="1" fill="#888"/><circle cx="6" cy="6" r="1" fill="#135"/><circle cx="11" cy="6" r="1" fill="#135"/></svg>
<svg class="a" style="left:1065px;top:950px" width="20" height="19" viewBox="0 0 20 19"><rect width="20" height="19" rx="3" fill="#c71818"/><path d="M4 15c3-2 5-7 6-11 0 4 2 9 6 10-4-1-9 0-12 1z" stroke="#fff" stroke-width="1.6" fill="none"/></svg>
<svg class="a" style="left:1102px;top:949px" width="24" height="22" viewBox="0 0 24 22"><circle cx="13" cy="11" r="10.5" fill="#ee6a3a"/><path d="M13 .5A10.5 10.5 0 0 1 23.5 11H13z" fill="#ff9a6a"/><rect x="1" y="5" width="11" height="12" rx="1.5" fill="#c8431a"/><path d="M4.5 14V8h3a2 2 0 0 1 0 4h-3" stroke="#fff" stroke-width="1.5" fill="none"/></svg>
<svg class="a" style="left:1141px;top:949px" width="24" height="21" viewBox="0 0 24 21"><rect x="6" y="1" width="18" height="19" rx="2" fill="#2f7be8"/><rect x="6" y="1" width="18" height="6" fill="#50a0f8"/><rect x="1" y="5" width="12" height="12" rx="1.5" fill="#1a55c0"/><path d="M3 8l1.8 6 1.8-5 1.8 5L10 8" stroke="#fff" stroke-width="1.2" fill="none"/></svg>
<svg class="a" style="left:1181px;top:951px" width="22" height="17" viewBox="0 0 22 17"><rect width="22" height="17" rx="2" fill="#3a3a3a"/><rect width="22" height="4" fill="#555"/><path d="M4 7l4 3-4 3" stroke="#eee" stroke-width="1.5" fill="none"/><path d="M10 14h7" stroke="#eee" stroke-width="1.5"/></svg>
<svg class="a" style="left:1222px;top:950px" width="20" height="20" viewBox="0 0 20 20"><rect width="20" height="20" rx="2" fill="#2f7a3a"/><path d="M3 3l7 14 7-14" stroke="#e8f0e8" stroke-width="2" fill="none"/><path d="M10 3v7" stroke="#e8f0e8" stroke-width="1.5"/></svg>
<svg class="a" style="left:1260px;top:950px" width="20" height="20" viewBox="0 0 20 20"><rect x="8" y="1" width="11" height="17" rx="1" fill="#c8c8c8"/><rect x="1" y="9" width="12" height="10" rx="1" fill="#a8a8a8"/><circle cx="13" cy="6" r="2" fill="#3a3"/></svg>
<div class="a" style="left:720px;top:975px;width:6px;height:2px;background:#888"></div>
<div class="a" style="left:760px;top:975px;width:6px;height:2px;background:#888"></div>
<div class="a" style="left:915px;top:975px;width:6px;height:2px;background:#888"></div>
<div class="a" style="left:954px;top:975px;width:6px;height:2px;background:#888"></div>
<div class="a" style="left:993px;top:975px;width:6px;height:2px;background:#888"></div>
<div class="a" style="left:1033px;top:975px;width:6px;height:2px;background:#888"></div>
<div class="a" style="left:1072px;top:975px;width:6px;height:2px;background:#888"></div>
<div class="a" style="left:1111px;top:975px;width:6px;height:2px;background:#888"></div>
<div class="a" style="left:1150px;top:975px;width:6px;height:2px;background:#888"></div>
<div class="a" style="left:1189px;top:975px;width:6px;height:2px;background:#888"></div>
<div class="a" style="left:1229px;top:975px;width:6px;height:2px;background:#888"></div>
<div class="a" style="left:1267px;top:975px;width:6px;height:2px;background:#888"></div>
<svg class="a" style="left:1348px;top:954px" width="14" height="9"><path d="M2 7l5-5 5 5" stroke="#ddd" stroke-width="1.6" fill="none"/></svg>
<div class="a" style="left:1376px;top:952px;width:14px;height:16px;background:#2a8ae8;border-radius:3px"></div>
<div class="a" style="left:1404px;top:953px;width:12px;height:10px;background:#30c040;border-radius:50%"></div>
<div class="a" style="left:1410px;top:957px;width:9px;height:8px;background:#ddd;border-radius:50%"></div>
<div class="a" style="left:1432px;top:954px;width:16px;height:11px;border:1px solid #ccc;border-radius:2px"></div>
<div class="a nw" style="left:1461px;top:951px;font-size:13px;color:#eee">英</div>
<svg class="a" style="left:1488px;top:952px" width="16" height="14"><path d="M1 5a10 10 0 0 1 14 0M3.5 8a6.5 6.5 0 0 1 9 0M6 11a3 3 0 0 1 4 0" stroke="#ddd" stroke-width="1.4" fill="none"/></svg>
<svg class="a" style="left:1509px;top:953px" width="14" height="14"><path d="M1 5h3l4-4v12l-4-4H1z" stroke="#ddd" stroke-width="1.3" fill="none"/><path d="M10 4a4 4 0 0 1 0 6" stroke="#888" stroke-width="1.2" fill="none"/></svg>
<div class="a" style="left:1531px;top:953px;width:16px;height:13px;background:#bbb;border-radius:40% 40% 2px 2px"></div>
<div class="a nw" style="left:1540px;top:946px;width:76px;text-align:right;font-size:11px;color:#eee">12:48</div>
<div class="a nw" style="left:1540px;top:960px;width:76px;text-align:right;font-size:11px;color:#eee;letter-spacing:-0.3px">2024/10/21</div>
<div class="a" style="left:1624px;top:952px;width:12px;height:13px;border:1.5px solid #ddd;border-radius:6px 6px 1px 1px"></div>
<div class="a" style="left:3px;top:978px;width:1784px;height:29px;background:#1d1d1d"></div>
<div class="a" style="left:1784px;top:978px;width:3px;height:29px;background:#5a5a5a"></div>
<svg class="a" style="left:12px;top:985px" width="18" height="17" viewBox="0 0 18 17"><path d="M0 1.5l7.5-1v7.5H0zM8.5 .4L18 0v8H8.5zM0 9h7.5v7.5L0 15.5zM8.5 9H18v8l-9.5-1z" fill="#f4f4f4"/></svg>
<div class="a" style="left:38px;top:979px;width:240px;height:28px;background:#464646"></div>
<svg class="a" style="left:47px;top:984px" width="18" height="18" viewBox="0 0 18 18"><circle cx="11" cy="7" r="5.5" stroke="#ccc" stroke-width="1.5" fill="none"/><path d="M7 11l-5.5 5.5" stroke="#ccc" stroke-width="1.6"/></svg>
<div class="a nw" style="left:75px;top:985px;font-size:12.5px;color:#ddd">搜索</div>
<svg class="a" style="left:226px;top:984px" width="44" height="20" viewBox="0 0 44 20"><path d="M18 2c1 6 3 8 8 9-5 1-7 3-8 9-1-6-3-8-8-9 5-1 7-3 8-9z" fill="#f8c030"/><path d="M33 8c.5 3 1.5 4 4 4.5-2.5.5-3.5 1.5-4 4.5-.5-3-1.5-4-4-4.5 2.5-.5 3.5-1.5 4-4.5z" fill="#f8c030"/><path d="M5 14l1 2 2 1-2 1-1 2-1-2-2-1 2-1z" fill="#3a90e0"/><circle cx="29" cy="3" r="1.3" fill="#f07a30"/><circle cx="42" cy="16" r="1.1" fill="#6c6"/></svg>
<svg class="a" style="left:286px;top:985px" width="18" height="16" viewBox="0 0 18 16"><rect x="1" y="2" width="11" height="12" stroke="#ddd" stroke-width="1.6" fill="none"/><path d="M15 1v3M15 6v4M15 12v3" stroke="#ddd" stroke-width="1.6"/><path d="M0 2h13M0 14h13" stroke="#ddd" stroke-width="1.6"/></svg>
<svg class="a" style="left:322px;top:985px" width="17" height="17" viewBox="0 0 17 17"><circle cx="8.5" cy="8.5" r="8" fill="#1d8fe0"/><path d="M16.5 8.5A8 8 0 0 0 1 6c2-3 9-4 10.5 1 .5 2-2 3-4.5 2.5 1.5 2 6 3 10-1z" fill="#3ccf8e"/><circle cx="8" cy="10.5" r="2.6" fill="#1d1d1d"/></svg>
<svg class="a" style="left:357px;top:986px" width="17" height="15" viewBox="0 0 17 15"><path d="M0 1h6l2 2h9v12H0z" fill="#f0b828"/><path d="M0 5h17v10H0z" fill="#ffd350"/><rect x="4" y="9" width="9" height="5" fill="#1f78d1"/></svg>
<svg class="a" style="left:392px;top:985px" width="16" height="16" viewBox="0 0 16 16"><rect width="16" height="16" fill="#ffd21e"/><path d="M10 16l6-6h-6z" fill="#555"/></svg>
<svg class="a" style="left:427px;top:985px" width="15" height="16" viewBox="0 0 15 16"><rect width="15" height="16" rx="3" fill="#2a94f0"/><path d="M4 3l7 6-2 1 1 4-3-3-2 1z" fill="#fff"/></svg>
<svg class="a" style="left:460px;top:985px" width="16" height="17" viewBox="0 0 16 17"><rect width="16" height="17" rx="3" fill="#b8d4f0"/><circle cx="8" cy="7" r="4" fill="#5a3a2a"/><circle cx="8" cy="8" r="3" fill="#f0d0b8"/><path d="M2 17c1-4 11-4 12 0z" fill="#fff"/></svg>
<svg class="a" style="left:496px;top:985px" width="13" height="16" viewBox="0 0 13 16"><rect x="4" y="0" width="5" height="8" fill="#888"/><rect x="0" y="8" width="13" height="8" rx="1" fill="#ddd"/><rect x="2" y="10" width="3" height="3" fill="#333"/><rect x="8" y="10" width="3" height="3" fill="#333"/></svg>
<svg class="a" style="left:531px;top:985px" width="13" height="16" viewBox="0 0 13 16"><rect width="13" height="16" fill="#2f7a3a"/><path d="M2 2l4.5 10 4.5-10" stroke="#e8f0e8" stroke-width="1.6" fill="none"/></svg>
<svg class="a" style="left:563px;top:985px" width="16" height="16" viewBox="0 0 16 16"><rect width="16" height="16" rx="4" fill="#f0306a"/><path d="M3 4l10 4-10 4z" fill="#fff"/></svg>
<svg class="a" style="left:597px;top:985px" width="16" height="16" viewBox="0 0 16 16"><rect width="16" height="16" rx="3" fill="#e82020"/><text x="2" y="12" font-size="9" fill="#fff" font-family="Liberation Sans" font-weight="bold">yd</text></svg>
<svg class="a" style="left:633px;top:986px" width="14" height="14" viewBox="0 0 14 14"><circle cx="7" cy="7" r="4" stroke="#ddd" stroke-width="2.5" fill="none" stroke-dasharray="2.2 1.4"/><circle cx="7" cy="7" r="2.5" stroke="#ddd" stroke-width="1.5" fill="none"/></svg>
<svg class="a" style="left:666px;top:987px" width="16" height="13" viewBox="0 0 16 13"><rect width="16" height="13" fill="#4aa0e8"/><rect x="2" y="3" width="6" height="5" fill="#f0c040"/><rect x="9" y="3" width="5" height="7" fill="#cfe"/></svg>
<svg class="a" style="left:702px;top:985px" width="15" height="17" viewBox="0 0 15 17"><rect width="15" height="17" fill="#1a3cd8"/><text x="4" y="10" font-size="9" fill="#fff" font-family="Liberation Sans" font-weight="bold">J</text><rect x="2" y="12" width="11" height="3" fill="#fff" opacity=".8"/></svg>
<svg class="a" style="left:735px;top:986px" width="17" height="14" viewBox="0 0 17 14"><ellipse cx="6.5" cy="5.5" rx="6" ry="5" fill="#2ec44a"/><ellipse cx="11" cy="9" rx="5.5" ry="4.5" fill="#eee"/></svg>
<svg class="a" style="left:771px;top:985px" width="13" height="16" viewBox="0 0 13 16"><rect x="4" y="0" width="5" height="8" fill="#888"/><rect x="0" y="8" width="13" height="8" rx="1" fill="#ddd"/><rect x="2" y="10" width="3" height="3" fill="#333"/><rect x="8" y="10" width="3" height="3" fill="#333"/></svg>
<div class="a" style="left:316px;top:1005px;width:29px;height:2px;background:#9a9a9a"></div>
<div class="a" style="left:350px;top:1005px;width:29px;height:2px;background:#9a9a9a"></div>
<div class="a" style="left:385px;top:1005px;width:29px;height:2px;background:#9a9a9a"></div>
<div class="a" style="left:420px;top:1005px;width:29px;height:2px;background:#9a9a9a"></div>
<div class="a" style="left:455px;top:1005px;width:29px;height:2px;background:#9a9a9a"></div>
<div class="a" style="left:489px;top:1005px;width:29px;height:2px;background:#9a9a9a"></div>
<div class="a" style="left:524px;top:1005px;width:29px;height:2px;background:#9a9a9a"></div>
<div class="a" style="left:558px;top:1005px;width:29px;height:2px;background:#9a9a9a"></div>
<div class="a" style="left:592px;top:1005px;width:29px;height:2px;background:#9a9a9a"></div>
<div class="a" style="left:627px;top:1005px;width:29px;height:2px;background:#9a9a9a"></div>
<div class="a" style="left:661px;top:1005px;width:29px;height:2px;background:#9a9a9a"></div>
<div class="a" style="left:695px;top:1005px;width:29px;height:2px;background:#9a9a9a"></div>
<div class="a" style="left:730px;top:1005px;width:29px;height:2px;background:#9a9a9a"></div>
<div class="a" style="left:764px;top:1005px;width:29px;height:2px;background:#9a9a9a"></div>
<svg class="a" style="left:1473px;top:989px" width="14" height="9"><path d="M2 7l5-5 5 5" stroke="#ddd" stroke-width="1.6" fill="none"/></svg>
<svg class="a" style="left:1493px;top:985px" width="15" height="16" viewBox="0 0 15 16"><path d="M13 3A6.5 6.5 0 1 0 13 12V8H8" stroke="#e8301a" stroke-width="2.8" fill="none"/><path d="M10 1l4-1" stroke="#e8301a" stroke-width="2"/></svg>
<svg class="a" style="left:1514px;top:985px" width="14" height="16" viewBox="0 0 14 16"><rect width="14" height="16" rx="3" fill="#2a94f0"/><path d="M4 3l6 5-2 1 1 4-3-3-2 1z" fill="#fff"/></svg>
<svg class="a" style="left:1535px;top:986px" width="17" height="14" viewBox="0 0 17 14"><ellipse cx="6.5" cy="5.5" rx="6" ry="5" fill="#2ec44a"/><ellipse cx="11" cy="9" rx="5.5" ry="4.5" fill="#eee"/></svg>
<svg class="a" style="left:1559px;top:985px" width="17" height="16" viewBox="0 0 17 16"><rect x="1" y="2" width="14" height="12" stroke="#ccc" stroke-width="1.4" fill="none"/><rect x="4" y="5" width="5" height="5" stroke="#ccc" fill="none"/><circle cx="13" cy="13" r="3" fill="#2a7ae0"/></svg>
<svg class="a" style="left:1581px;top:987px" width="18" height="12" viewBox="0 0 18 12"><rect x="3" y="3" width="14" height="8" rx="1.5" stroke="#ccc" stroke-width="1.4" fill="none"/><circle cx="3" cy="3" r="2.5" stroke="#ccc" stroke-width="1.2" fill="none"/></svg>
<svg class="a" style="left:1604px;top:987px" width="20" height="14"><path d="M1 5h3l4-4v12l-4-4H1z" stroke="#ddd" stroke-width="1.3" fill="none"/><path d="M11 4l5 6M16 4l-5 6" stroke="#ddd" stroke-width="1.3"/></svg>
<svg class="a" style="left:1628px;top:986px" width="16" height="16"><path d="M2 14a12 12 0 0 1 12-12M5 14a9 9 0 0 1 9-9M8 14a6 6 0 0 1 6-6" stroke="#ccc" stroke-width="1.3" fill="none"/></svg>
<div class="a nw" style="left:1648px;top:984px;font-size:13px;color:#eee">中</div>
<svg class="a" style="left:1673px;top:986px" width="14" height="14" viewBox="0 0 14 14"><rect x="1" y="1" width="12" height="12" stroke="#eee" stroke-width="1.4" fill="none"/><path d="M4.5 1v12M9.5 1v12M1 5h12M1 9h12" stroke="#eee" stroke-width="1.2"/></svg>
<div class="a nw" style="left:1706px;top:986px;font-size:12px;color:#eee">12:48</div>
<svg class="a" style="left:1750px;top:985px" width="16" height="16" viewBox="0 0 16 16"><path d="M0 0h16v12H10l-2 3-2-3H0z" fill="#f2f2f2"/><path d="M3 3h10M3 6h10M3 9h7" stroke="#777" stroke-width="1"/></svg>
</body></html>
